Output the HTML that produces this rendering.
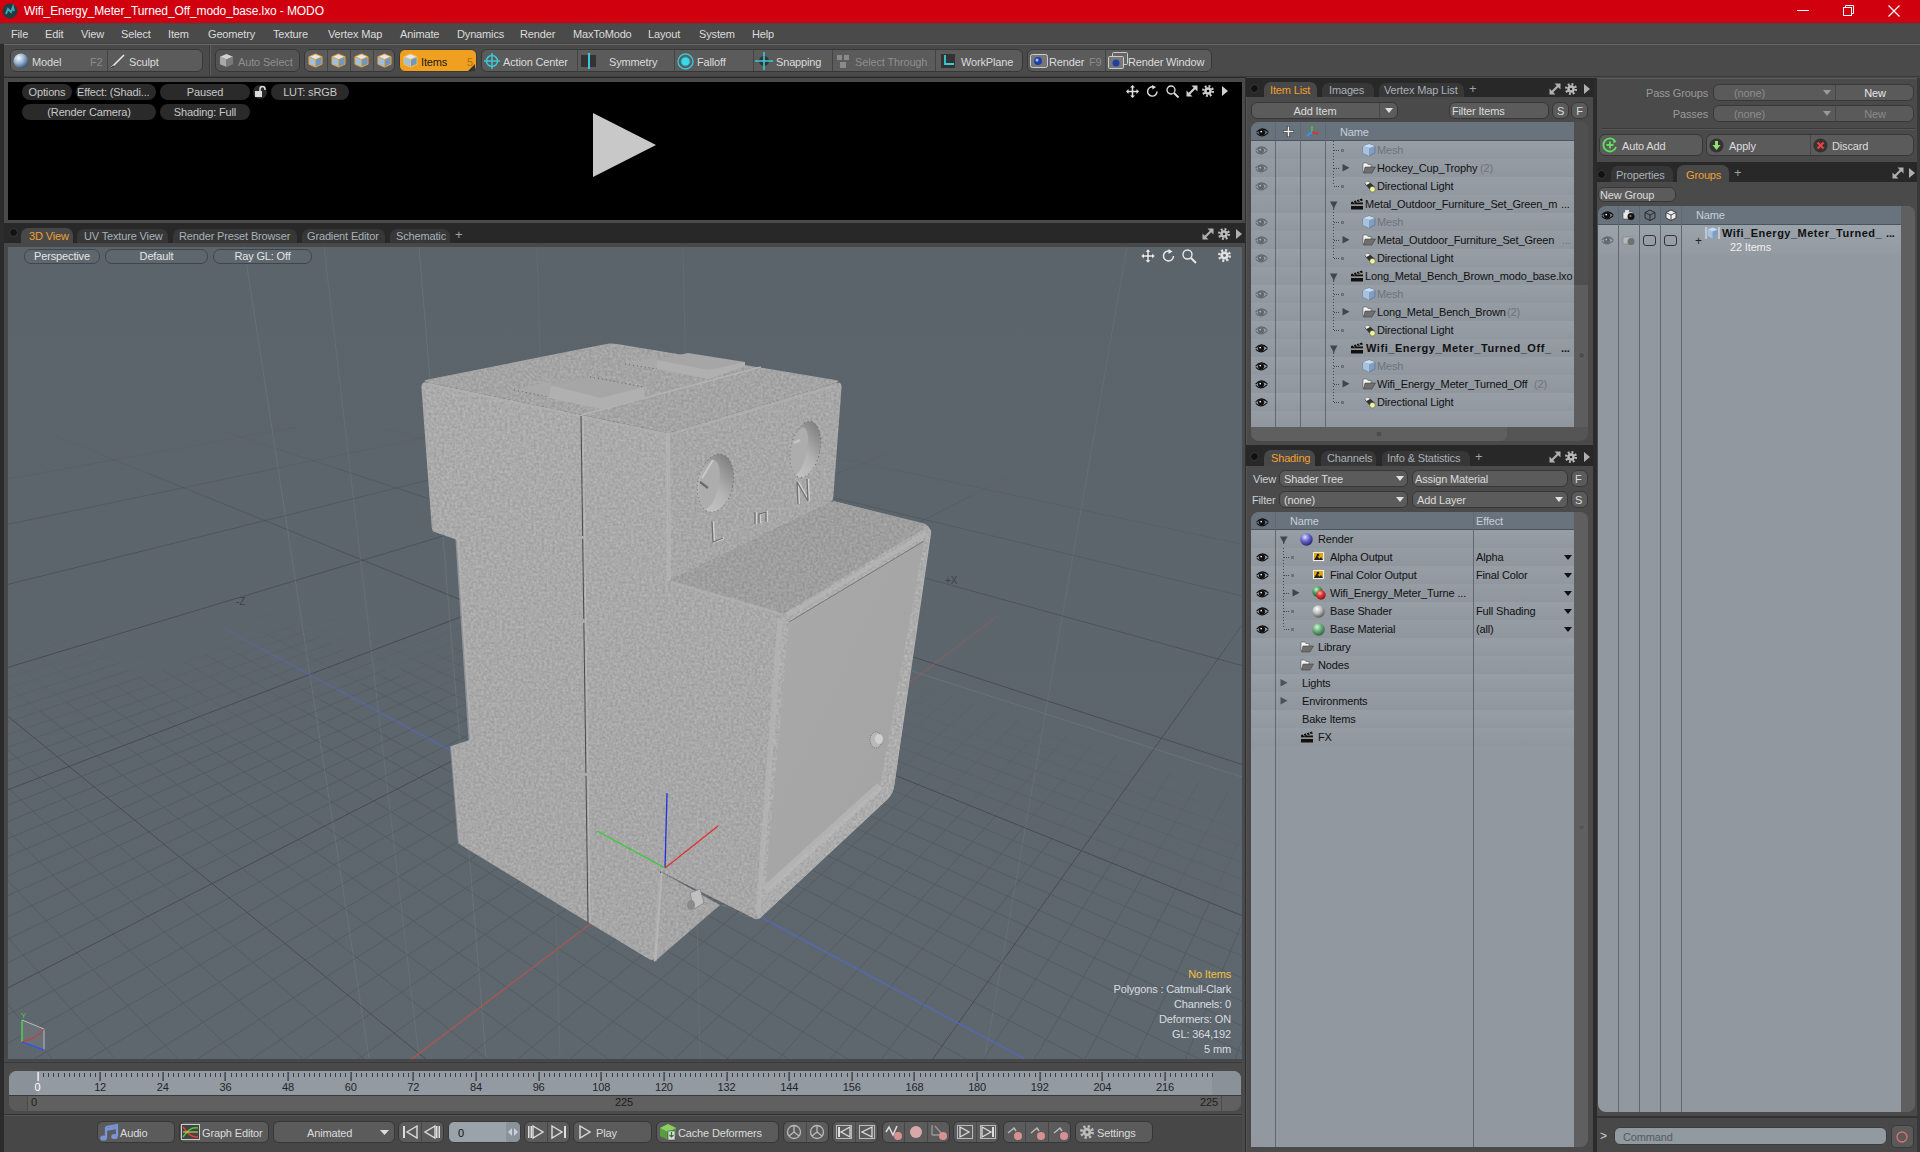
<!DOCTYPE html>
<html><head><meta charset="utf-8"><style>
*{box-sizing:border-box;margin:0;padding:0}
html,body{width:1920px;height:1152px;overflow:hidden;background:#2c2c2c;font-family:"Liberation Sans",sans-serif;font-size:11px;letter-spacing:-0.15px;color:#d0d0d0}
.a{position:absolute}
.t{position:absolute;white-space:nowrap;line-height:14px}
svg{position:absolute;overflow:visible}

.btn{position:absolute;background:#5b5b5b;border:1px solid #353535;border-radius:6px}
.rb{position:absolute;background:#2a2a2a;border-radius:8px}
.vb{position:absolute;background:#5f676e;border:1px solid #3e454b;border-radius:7px}
.tab{position:absolute;background:#383838;border-radius:8px 8px 0 0}
.on{background:#484848}
.dv{position:absolute;width:1px;background:#3c3c3c}
</style></head><body>
<div class="a" style="left:0px;top:0px;width:1920px;height:1152px;background:#2d2d2d;"></div>
<div class="a" style="left:0px;top:0px;width:1920px;height:23px;background:#d0000f;"></div>
<div class="a" style="left:0px;top:23px;width:1920px;height:1px;background:#3e4848;"></div>
<svg style="left:2px;top:3px" width="16" height="16"><circle cx="8" cy="8" r="7.5" fill="#223c43"/><path d="M4 11 L6 6 L9 9 L11 4 L12 8" stroke="#3aa7b8" stroke-width="2" fill="none"/></svg>
<div class="t" style="left:24px;top:4.24px;color:#ffffff;font-size:12px;letter-spacing:-0.1px;">Wifi_Energy_Meter_Turned_Off_modo_base.lxo - MODO</div>
<svg style="left:1797px;top:10px" width="14" height="2"><rect width="12" height="1" fill="#fff"/></svg>
<svg style="left:1843px;top:5px" width="12" height="12"><rect x="0.5" y="2.5" width="8" height="8" fill="none" stroke="#fff"/><path d="M2.5 2.5 V0.5 H10.5 V8.5 H8.5" fill="none" stroke="#fff"/></svg>
<svg style="left:1888px;top:5px" width="12" height="12"><path d="M0.5 0.5 L11.5 11.5 M11.5 0.5 L0.5 11.5" stroke="#fff" stroke-width="1.2"/></svg>
<div class="a" style="left:0px;top:24px;width:1920px;height:20px;background:#4a4a4a;"></div>
<div class="t" style="left:11px;top:27.22px;color:#dcdcdc;font-size:11px;">File</div>
<div class="t" style="left:45px;top:27.22px;color:#dcdcdc;font-size:11px;">Edit</div>
<div class="t" style="left:81px;top:27.22px;color:#dcdcdc;font-size:11px;">View</div>
<div class="t" style="left:121px;top:27.22px;color:#dcdcdc;font-size:11px;">Select</div>
<div class="t" style="left:168px;top:27.22px;color:#dcdcdc;font-size:11px;">Item</div>
<div class="t" style="left:208px;top:27.22px;color:#dcdcdc;font-size:11px;">Geometry</div>
<div class="t" style="left:273px;top:27.22px;color:#dcdcdc;font-size:11px;">Texture</div>
<div class="t" style="left:328px;top:27.22px;color:#dcdcdc;font-size:11px;">Vertex Map</div>
<div class="t" style="left:400px;top:27.22px;color:#dcdcdc;font-size:11px;">Animate</div>
<div class="t" style="left:457px;top:27.22px;color:#dcdcdc;font-size:11px;">Dynamics</div>
<div class="t" style="left:520px;top:27.22px;color:#dcdcdc;font-size:11px;">Render</div>
<div class="t" style="left:573px;top:27.22px;color:#dcdcdc;font-size:11px;">MaxToModo</div>
<div class="t" style="left:648px;top:27.22px;color:#dcdcdc;font-size:11px;">Layout</div>
<div class="t" style="left:699px;top:27.22px;color:#dcdcdc;font-size:11px;">System</div>
<div class="t" style="left:752px;top:27.22px;color:#dcdcdc;font-size:11px;">Help</div>
<div class="a" style="left:0px;top:43px;width:1920px;height:1px;background:#444444;"></div>
<div class="a" style="left:4px;top:44px;width:1916px;height:34px;background:#4a4a4a;"></div>
<div class="a" style="left:0px;top:44px;width:1920px;height:1px;background:#686868;"></div>
<div class="a" style="left:4px;top:76px;width:1916px;height:1px;background:#3b3b3b;"></div>
<div class="a" style="left:0px;top:44px;width:4px;height:1108px;background:#2b2b2b;"></div>
<div class="a" style="left:10px;top:49px;width:193px;height:23px;background:#5b5b5b;border:1px solid #373737;border-radius:6px"></div>
<div class="a" style="left:107px;top:50px;width:1px;height:21px;background:#444;"></div>
<svg style="left:13px;top:53px" width="16" height="16"><defs><radialGradient id="sph" cx="0.35" cy="0.3" r="0.7"><stop offset="0" stop-color="#f4f8ff"/><stop offset="0.5" stop-color="#9ab6d4"/><stop offset="1" stop-color="#3d5670"/></radialGradient></defs><circle cx="8" cy="8" r="7.5" fill="url(#sph)"/></svg>
<div class="t" style="left:32px;top:54.72px;color:#dcdcdc;font-size:11px;">Model</div>
<div class="t" style="left:90px;top:54.72px;color:#8c8c8c;font-size:11px;">F2</div>
<svg style="left:110px;top:53px" width="16" height="16"><path d="M1 15 L14 2" stroke="#e8e8e8" stroke-width="1.6"/><path d="M1 15 L4 13" stroke="#333" stroke-width="1.5"/></svg>
<div class="t" style="left:129px;top:54.72px;color:#dcdcdc;font-size:11px;">Sculpt</div>
<div class="a" style="left:209px;top:45px;width:1px;height:31px;background:#3a3a3a;"></div>
<div class="a" style="left:210px;top:45px;width:1px;height:31px;background:#5e5e5e;"></div>
<div class="a" style="left:215px;top:49px;width:85px;height:23px;background:#545454;border:1px solid #373737;border-radius:6px"></div>
<svg style="left:219px;top:53px" width="15" height="15" viewBox="0 0 16 16"><path d="M8 1 L15 4 L8 7 L1 4Z" fill="#d0d0d0"/><path d="M1 4 L8 7 L8 15 L1 12Z" fill="#a8a8a8"/><path d="M15 4 L8 7 L8 15 L15 12Z" fill="#7a7a7a"/></svg>
<div class="t" style="left:238px;top:54.72px;color:#8e8e8e;font-size:11px;">Auto Select</div>
<div class="a" style="left:304px;top:49px;width:91px;height:23px;background:#5b5b5b;border:1px solid #373737;border-radius:6px"></div>
<svg style="left:308px;top:53px" width="15" height="15" viewBox="0 0 16 16"><path d="M8 1 L15 4 L8 7 L1 4Z" fill="#dfe8f2"/><path d="M1 4 L8 7 L8 15 L1 12Z" fill="#9ec0e0"/><path d="M15 4 L8 7 L8 15 L15 12Z" fill="#6f98c0"/><path d="M8 1 L15 4 L15 12 L8 15 L1 12 L1 4Z M1 4 L8 7 L15 4 M8 7 V15" fill="none" stroke="#f0a030" stroke-width="1"/></svg>
<div class="a" style="left:327px;top:50px;width:1px;height:21px;background:#444;"></div>
<svg style="left:331px;top:53px" width="15" height="15" viewBox="0 0 16 16"><path d="M8 1 L15 4 L8 7 L1 4Z" fill="#dfe8f2"/><path d="M1 4 L8 7 L8 15 L1 12Z" fill="#9ec0e0"/><path d="M15 4 L8 7 L8 15 L15 12Z" fill="#6f98c0"/><path d="M8 1 L15 4 L15 12 L8 15 L1 12 L1 4Z M1 4 L8 7 L15 4 M8 7 V15" fill="none" stroke="#f0a030" stroke-width="1"/></svg>
<div class="a" style="left:350px;top:50px;width:1px;height:21px;background:#444;"></div>
<svg style="left:354px;top:53px" width="15" height="15" viewBox="0 0 16 16"><path d="M8 1 L15 4 L8 7 L1 4Z" fill="#dfe8f2"/><path d="M1 4 L8 7 L8 15 L1 12Z" fill="#9ec0e0"/><path d="M15 4 L8 7 L8 15 L15 12Z" fill="#6f98c0"/><path d="M8 1 L15 4 L15 12 L8 15 L1 12 L1 4Z M1 4 L8 7 L15 4 M8 7 V15" fill="none" stroke="#f0a030" stroke-width="1"/></svg>
<div class="a" style="left:373px;top:50px;width:1px;height:21px;background:#444;"></div>
<svg style="left:377px;top:53px" width="15" height="15" viewBox="0 0 16 16"><path d="M8 1 L15 4 L8 7 L1 4Z" fill="#dfe8f2"/><path d="M1 4 L8 7 L8 15 L1 12Z" fill="#9ec0e0"/><path d="M15 4 L8 7 L8 15 L15 12Z" fill="#6f98c0"/><path d="M8 1 L15 4 L15 12 L8 15 L1 12 L1 4Z M1 4 L8 7 L15 4 M8 7 V15" fill="none" stroke="#f0a030" stroke-width="1"/></svg>
<div class="a" style="left:399px;top:49px;width:78px;height:23px;background:#f0a020;border:1px solid #3a3a3a;border-radius:6px"></div>
<svg style="left:403px;top:53px" width="15" height="15" viewBox="0 0 16 16"><path d="M8 1 L15 4 L8 7 L1 4Z" fill="#dfe8f2"/><path d="M1 4 L8 7 L8 15 L1 12Z" fill="#9ec0e0"/><path d="M15 4 L8 7 L8 15 L15 12Z" fill="#6f98c0"/><path d="M8 1 L15 4 L15 12 L8 15 L1 12 L1 4Z M1 4 L8 7 L15 4 M8 7 V15" fill="none" stroke="#f0c060" stroke-width="1"/></svg>
<div class="t" style="left:421px;top:54.72px;color:#1a1a1a;font-size:11px;">Items</div>
<div class="t" style="left:467px;top:54.72px;color:#b07010;font-size:11px;">5</div>
<svg style="left:468px;top:64px" width="7" height="7"><path d="M7 0 L7 7 L0 7Z" fill="#333"/></svg>
<div class="a" style="left:481px;top:49px;width:542px;height:23px;background:#5b5b5b;border:1px solid #373737;border-radius:6px"></div>
<div class="a" style="left:577px;top:50px;width:1px;height:21px;background:#444;"></div>
<div class="a" style="left:674px;top:50px;width:1px;height:21px;background:#444;"></div>
<div class="a" style="left:753px;top:50px;width:1px;height:21px;background:#444;"></div>
<div class="a" style="left:832px;top:50px;width:1px;height:21px;background:#444;"></div>
<div class="a" style="left:935px;top:50px;width:1px;height:21px;background:#444;"></div>
<svg style="left:484px;top:53px" width="16" height="16"><circle cx="8" cy="8" r="5.5" fill="none" stroke="#3cc8d8" stroke-width="1.5"/><path d="M8 0 V16 M0 8 H16" stroke="#3cc8d8" stroke-width="1.5"/></svg>
<div class="t" style="left:503px;top:54.72px;color:#dcdcdc;font-size:11px;">Action Center</div>
<svg style="left:581px;top:53px" width="16" height="16"><rect x="0" y="2" width="15" height="12" fill="#333"/><rect x="7" y="0" width="2" height="16" fill="#3cc8d8"/></svg>
<div class="t" style="left:609px;top:54.72px;color:#dcdcdc;font-size:11px;">Symmetry</div>
<svg style="left:677px;top:53px" width="17" height="17"><circle cx="8.5" cy="8.5" r="7.5" fill="none" stroke="#3cc8d8" stroke-width="1.3"/><circle cx="8.5" cy="8.5" r="4.5" fill="#3cd8e8" stroke="#2a9aa8"/></svg>
<div class="t" style="left:697px;top:54.72px;color:#dcdcdc;font-size:11px;">Falloff</div>
<svg style="left:755px;top:52px" width="18" height="18"><circle cx="9" cy="9" r="5" fill="#333"/><path d="M9 0 V18 M0 9 H18" stroke="#3cc8d8" stroke-width="1.6"/></svg>
<div class="t" style="left:776px;top:54.72px;color:#dcdcdc;font-size:11px;">Snapping</div>
<svg style="left:835px;top:53px" width="16" height="16"><path d="M2 2 h5 v5 h-5z M9 2 h5 v5 h-5z M5 9 h6 v6 h-6z" fill="#8a8a8a"/></svg>
<div class="t" style="left:855px;top:54.72px;color:#8e8e8e;font-size:11px;">Select Through</div>
<svg style="left:940px;top:53px" width="16" height="16"><rect x="1" y="1" width="14" height="14" fill="#333"/><path d="M5 2 V11 H14" stroke="#3cc8d8" stroke-width="1.8" fill="none"/></svg>
<div class="t" style="left:961px;top:54.72px;color:#dcdcdc;font-size:11px;">WorkPlane</div>
<div class="a" style="left:1027px;top:49px;width:185px;height:23px;background:#5b5b5b;border:1px solid #373737;border-radius:6px"></div>
<div class="a" style="left:1105px;top:50px;width:1px;height:21px;background:#444;"></div>
<svg style="left:1030px;top:53px" width="18" height="16"><rect x="0.5" y="1.5" width="17" height="13" rx="2" fill="#777" stroke="#ccc"/><circle cx="8" cy="8" r="4" fill="#2040a0"/><circle cx="7" cy="7" r="1.5" fill="#a0c0ff"/></svg>
<div class="t" style="left:1049px;top:54.72px;color:#dcdcdc;font-size:11px;">Render</div>
<div class="t" style="left:1089px;top:54.72px;color:#8c8c8c;font-size:11px;">F9</div>
<svg style="left:1108px;top:52px" width="20" height="18"><rect x="4.5" y="0.5" width="15" height="12" rx="1" fill="#666" stroke="#ccc"/><rect x="0.5" y="4.5" width="15" height="12" rx="1" fill="#777" stroke="#ccc"/><circle cx="8" cy="11" r="3.5" fill="#2040a0"/></svg>
<div class="t" style="left:1128px;top:54.72px;color:#dcdcdc;font-size:11px;">Render Window</div>
<div class="a" style="left:4px;top:77px;width:1242px;height:1px;background:#2b2b2b;"></div>
<div class="a" style="left:4px;top:78px;width:1242px;height:145px;background:#4a4a4a;"></div>
<div class="a" style="left:8px;top:82px;width:1234px;height:138px;background:#000;"></div>
<div class="a" style="left:22px;top:84px;width:50px;height:16px;background:#2a2a2a;border-radius:8px"></div>
<div class="t" style="left:22px;width:50px;text-align:center;top:85.22px;color:#c8c8c8;font-size:11px;">Options</div>
<div class="a" style="left:76px;top:84px;width:80px;height:16px;background:#2a2a2a;border-radius:8px"></div>
<div class="t" style="left:77px;top:85.22px;color:#c8c8c8;font-size:11px;">Effect: (Shadi...</div>
<div class="a" style="left:160px;top:84px;width:90px;height:16px;background:#2a2a2a;border-radius:8px"></div>
<div class="t" style="left:160px;width:90px;text-align:center;top:85.22px;color:#c8c8c8;font-size:11px;">Paused</div>
<svg style="left:253px;top:85px" width="14" height="14"><circle cx="7" cy="7" r="7" fill="#2a2a2a"/><path d="M7 6 V4 a2.5 2.5 0 0 1 5 0 V5" stroke="#ddd" stroke-width="1.5" fill="none"/><rect x="2" y="6" width="7" height="6" fill="#ddd"/></svg>
<div class="a" style="left:271px;top:84px;width:78px;height:16px;background:#2a2a2a;border-radius:8px"></div>
<div class="t" style="left:271px;width:78px;text-align:center;top:85.22px;color:#c8c8c8;font-size:11px;">LUT: sRGB</div>
<div class="a" style="left:22px;top:104px;width:134px;height:16px;background:#2a2a2a;border-radius:8px"></div>
<div class="t" style="left:22px;width:134px;text-align:center;top:105.22px;color:#c8c8c8;font-size:11px;">(Render Camera)</div>
<div class="a" style="left:160px;top:104px;width:90px;height:16px;background:#2a2a2a;border-radius:8px"></div>
<div class="t" style="left:160px;width:90px;text-align:center;top:105.22px;color:#c8c8c8;font-size:11px;">Shading: Full</div>
<svg style="left:592px;top:112px" width="65" height="66"><path d="M1 1 L64 33 L1 65Z" fill="#c8c8c8"/></svg>
<svg style="left:1126px;top:85px" width="13" height="13"><path d="M6.5 0 L9 2.5 H7.3 V5.7 H10.5 V4 L13 6.5 L10.5 9 V7.3 H7.3 V10.5 H9 L6.5 13 L4 10.5 H5.7 V7.3 H2.5 V9 L0 6.5 L2.5 4 V5.7 H5.7 V2.5 H4Z" fill="#e0e0e0"/></svg>
<svg style="left:1146px;top:85px" width="13" height="13"><path d="M11 6.5 A4.7 4.7 0 1 1 7.5 1.9" fill="none" stroke="#e0e0e0" stroke-width="1.4"/><path d="M6 0 L10 2 L6.5 4.5Z" fill="#e0e0e0"/></svg>
<svg style="left:1166px;top:85px" width="13" height="13"><circle cx="5" cy="5" r="4" fill="none" stroke="#e0e0e0" stroke-width="1.3"/><path d="M8 8 L12.5 12.5" stroke="#e0e0e0" stroke-width="1.8"/></svg>
<svg style="left:1186px;top:85px" width="12" height="12"><path d="M5.5 0.5 H11.5 V6.5 Z M0.5 5.5 V11.5 H6.5 Z" fill="#d0d0d0"/><path d="M9.5 2.5 L2.5 9.5" stroke="#d0d0d0" stroke-width="2.2"/></svg>
<svg style="left:1202px;top:85px" width="12" height="12" viewBox="0 0 12 12"><circle cx="6.0" cy="6.0" r="4.800000000000001" fill="none" stroke="#d0d0d0" stroke-width="2.4000000000000004" stroke-dasharray="1.88"/><circle cx="6.0" cy="6.0" r="3.7199999999999998" fill="#d0d0d0"/><circle cx="6.0" cy="6.0" r="1.32" fill="#000"/></svg>
<svg style="left:1222px;top:86px" width="6" height="10"><path d="M0 0 L6 5 L0 10Z" fill="#d0d0d0"/></svg>
<div class="a" style="left:4px;top:223px;width:1242px;height:20px;background:#282828;"></div>
<svg style="left:9px;top:228px" width="9" height="9"><circle cx="4.5" cy="4.5" r="4" fill="#111" stroke="#3a3a3a"/></svg>
<div class="a" style="left:21px;top:228px;width:52px;height:15px;background:#484848;border-radius:7px 7px 0 0"></div>
<div class="t" style="left:29px;top:229.22px;color:#f0a030;font-size:11px;">3D View</div>
<div class="a" style="left:77px;top:229px;width:91px;height:14px;background:#373737;border-radius:7px 7px 0 0"></div>
<div class="t" style="left:84px;top:229.22px;color:#a9b1b9;font-size:11px;">UV Texture View</div>
<div class="a" style="left:173px;top:229px;width:124px;height:14px;background:#373737;border-radius:7px 7px 0 0"></div>
<div class="t" style="left:179px;top:229.22px;color:#a9b1b9;font-size:11px;">Render Preset Browser</div>
<div class="a" style="left:302px;top:229px;width:83px;height:14px;background:#373737;border-radius:7px 7px 0 0"></div>
<div class="t" style="left:307px;top:229.22px;color:#a9b1b9;font-size:11px;">Gradient Editor</div>
<div class="a" style="left:390px;top:229px;width:60px;height:14px;background:#373737;border-radius:7px 7px 0 0"></div>
<div class="t" style="left:396px;top:229.22px;color:#a9b1b9;font-size:11px;">Schematic</div>
<div class="t" style="left:455px;top:228.26px;color:#a0a0a0;font-size:13px;">+</div>
<svg style="left:1202px;top:228px" width="12" height="12"><path d="M5.5 0.5 H11.5 V6.5 Z M0.5 5.5 V11.5 H6.5 Z" fill="#b0b0b0"/><path d="M9.5 2.5 L2.5 9.5" stroke="#b0b0b0" stroke-width="2.2"/></svg>
<svg style="left:1218px;top:228px" width="12" height="12" viewBox="0 0 12 12"><circle cx="6.0" cy="6.0" r="4.800000000000001" fill="none" stroke="#bdbdbd" stroke-width="2.4000000000000004" stroke-dasharray="1.88"/><circle cx="6.0" cy="6.0" r="3.7199999999999998" fill="#bdbdbd"/><circle cx="6.0" cy="6.0" r="1.32" fill="#2a2a2a"/></svg>
<svg style="left:1236px;top:229px" width="6" height="10"><path d="M0 0 L6 5 L0 10Z" fill="#b0b0b0"/></svg>
<div class="a" style="left:4px;top:243px;width:1242px;height:820px;background:#484848;"></div>
<div class="a" style="left:8px;top:247px;width:1234px;height:812px;background:#5f676e;"></div>
<div class="a" style="left:4px;top:1062px;width:1242px;height:52px;background:#4a4a4a;"></div>
<div class="a" style="left:4px;top:1062px;width:1242px;height:1px;background:#3a3a3a;"></div>
<div class="a" style="left:4px;top:1114px;width:1242px;height:1px;background:#333;"></div>
<div class="a" style="left:4px;top:1115px;width:1242px;height:37px;background:#474747;"></div>
<div class="a" style="left:4px;top:1115px;width:1242px;height:1px;background:#555;"></div>
<div class="a" style="left:1242px;top:78px;width:3px;height:145px;background:#4a4a4a;"></div>
<div class="a" style="left:1242px;top:243px;width:3px;height:909px;background:#4a4a4a;"></div>
<div class="a" style="left:1245px;top:78px;width:2px;height:1074px;background:#2e2e2e;"></div>
<div class="a" style="left:1246px;top:78px;width:347px;height:19px;background:#282828;"></div>
<svg style="left:1250px;top:84px" width="9" height="9"><circle cx="4.5" cy="4.5" r="4" fill="#111" stroke="#3a3a3a"/></svg>
<div class="a" style="left:1264px;top:82px;width:53px;height:15px;background:#484848;border-radius:7px 7px 0 0"></div>
<div class="t" style="left:1270px;top:83.22px;color:#f0a030;font-size:11px;">Item List</div>
<div class="a" style="left:1322px;top:83px;width:52px;height:14px;background:#373737;border-radius:7px 7px 0 0"></div>
<div class="t" style="left:1329px;top:83.22px;color:#a9b1b9;font-size:11px;">Images</div>
<div class="a" style="left:1379px;top:83px;width:85px;height:14px;background:#373737;border-radius:7px 7px 0 0"></div>
<div class="t" style="left:1384px;top:83.22px;color:#a9b1b9;font-size:11px;">Vertex Map List</div>
<div class="t" style="left:1469px;top:82.26px;color:#a0a0a0;font-size:13px;">+</div>
<svg style="left:1549px;top:83px" width="12" height="12"><path d="M5.5 0.5 H11.5 V6.5 Z M0.5 5.5 V11.5 H6.5 Z" fill="#b0b0b0"/><path d="M9.5 2.5 L2.5 9.5" stroke="#b0b0b0" stroke-width="2.2"/></svg>
<svg style="left:1565px;top:83px" width="12" height="12" viewBox="0 0 12 12"><circle cx="6.0" cy="6.0" r="4.800000000000001" fill="none" stroke="#bdbdbd" stroke-width="2.4000000000000004" stroke-dasharray="1.88"/><circle cx="6.0" cy="6.0" r="3.7199999999999998" fill="#bdbdbd"/><circle cx="6.0" cy="6.0" r="1.32" fill="#2a2a2a"/></svg>
<svg style="left:1584px;top:84px" width="6" height="10"><path d="M0 0 L6 5 L0 10Z" fill="#b0b0b0"/></svg>
<div class="a" style="left:1246px;top:97px;width:347px;height:348px;background:#4a4a4a;"></div>
<div class="a" style="left:1246px;top:97px;width:1px;height:348px;background:#555;"></div>
<div class="a" style="left:1251px;top:102px;width:147px;height:17px;background:#5b5b5b;border:1px solid #373737;border-radius:6px"></div>
<div class="a" style="left:1379px;top:103px;width:1px;height:15px;background:#474747;"></div>
<div class="t" style="left:1251px;width:128px;text-align:center;top:104.22px;color:#dcdcdc;font-size:11px;">Add Item</div>
<svg style="left:1385px;top:108px" width="8" height="5"><path d="M0 0 H8 L4 5Z" fill="#e0e0e0"/></svg>
<div class="a" style="left:1449px;top:102px;width:100px;height:17px;background:#5b5b5b;border:1px solid #373737;border-radius:6px"></div>
<div class="t" style="left:1452px;top:104.22px;color:#dcdcdc;font-size:11px;">Filter Items</div>
<div class="a" style="left:1552px;top:102px;width:17px;height:17px;background:#5b5b5b;border:1px solid #373737;border-radius:6px"></div>
<div class="t" style="left:1552px;width:17px;text-align:center;top:104.22px;color:#dcdcdc;font-size:11px;">S</div>
<div class="a" style="left:1571px;top:102px;width:17px;height:17px;background:#5b5b5b;border:1px solid #373737;border-radius:6px"></div>
<div class="t" style="left:1571px;width:17px;text-align:center;top:104.22px;color:#dcdcdc;font-size:11px;">F</div>
<div class="a" style="left:1251px;top:122px;width:337px;height:306px;background:#5e5e5e;border-radius:8px 8px 0 0"></div>
<div class="a" style="left:1574px;top:122px;width:14px;height:163px;background:#4f4f4f;border-radius:0 8px 0 0"></div>
<div class="a" style="left:1574px;top:285px;width:14px;height:142px;background:#5d5d5d;border-radius:6px 6px 0 0"></div>
<svg style="left:1578px;top:352px" width="7" height="7"><circle cx="3.5" cy="3.5" r="3" fill="#4c4c4c" stroke="#6a6a6a" stroke-width="0.8"/></svg>
<div class="a" style="left:1251px;top:122px;width:323px;height:19px;background:#68737e;border-radius:8px 0 0 0"></div>
<div class="a" style="left:1251px;top:140px;width:323px;height:1px;background:#4a545e;"></div>
<div class="a" style="left:1251px;top:141px;width:323px;height:18px;background:linear-gradient(#979ea6,#90979f);"></div>
<div class="a" style="left:1251px;top:159px;width:323px;height:18px;background:linear-gradient(#959ca4,#8f969e);"></div>
<div class="a" style="left:1251px;top:177px;width:323px;height:18px;background:linear-gradient(#979ea6,#90979f);"></div>
<div class="a" style="left:1251px;top:195px;width:323px;height:18px;background:linear-gradient(#959ca4,#8f969e);"></div>
<div class="a" style="left:1251px;top:213px;width:323px;height:18px;background:linear-gradient(#979ea6,#90979f);"></div>
<div class="a" style="left:1251px;top:231px;width:323px;height:18px;background:linear-gradient(#959ca4,#8f969e);"></div>
<div class="a" style="left:1251px;top:249px;width:323px;height:18px;background:linear-gradient(#979ea6,#90979f);"></div>
<div class="a" style="left:1251px;top:267px;width:323px;height:18px;background:linear-gradient(#959ca4,#8f969e);"></div>
<div class="a" style="left:1251px;top:285px;width:323px;height:18px;background:linear-gradient(#979ea6,#90979f);"></div>
<div class="a" style="left:1251px;top:303px;width:323px;height:18px;background:linear-gradient(#959ca4,#8f969e);"></div>
<div class="a" style="left:1251px;top:321px;width:323px;height:18px;background:linear-gradient(#979ea6,#90979f);"></div>
<div class="a" style="left:1251px;top:339px;width:323px;height:18px;background:linear-gradient(#959ca4,#8f969e);"></div>
<div class="a" style="left:1251px;top:357px;width:323px;height:18px;background:linear-gradient(#979ea6,#90979f);"></div>
<div class="a" style="left:1251px;top:375px;width:323px;height:18px;background:linear-gradient(#959ca4,#8f969e);"></div>
<div class="a" style="left:1251px;top:393px;width:323px;height:18px;background:linear-gradient(#979ea6,#90979f);"></div>
<div class="a" style="left:1251px;top:411px;width:323px;height:16px;background:linear-gradient(#959ca4,#8f969e);"></div>
<div class="a" style="left:1275px;top:122px;width:1px;height:305px;background:#5f6973;"></div>
<div class="a" style="left:1300px;top:122px;width:1px;height:305px;background:#5f6973;"></div>
<div class="a" style="left:1325px;top:122px;width:1px;height:305px;background:#5f6973;"></div>
<svg style="left:1256px;top:127px;opacity:1" width="13" height="11" viewBox="0 0 13 11"><path d="M0.6 5.2 Q6 -1.2 12.4 4.8" fill="none" stroke="#111" stroke-width="1.1"/><path d="M2.2 4 Q6.5 0.8 10.8 3.6" fill="none" stroke="#111" stroke-width="0.8"/><path d="M0.8 6.4 Q6 11.6 12.4 5.6" fill="none" stroke="#111" stroke-width="1.1"/><circle cx="6" cy="5.5" r="3.1" fill="#111"/><circle cx="5.2" cy="4.6" r="0.85" fill="#fff"/></svg>
<svg style="left:1282px;top:125px" width="13" height="13" viewBox="0 0 13 13"><path d="M6.5 1 V12 M1 6.5 H12" stroke="#333" stroke-width="3.2"/><path d="M6.5 1.5 V11.5 M1.5 6.5 H11.5" stroke="#f0f0f0" stroke-width="1.6"/></svg>
<svg style="left:1305px;top:125px" width="15" height="13" viewBox="0 0 15 13"><path d="M7 7 V1" stroke="#40c040" stroke-width="2"/><path d="M7 7 L13 9" stroke="#e03030" stroke-width="2.2"/><path d="M7 7 L2 11" stroke="#3a90ff" stroke-width="2"/></svg>
<div class="t" style="left:1340px;top:125.22px;color:#c6d0da;font-size:11px;">Name</div>
<div class="a" style="left:1251px;top:427px;width:337px;height:14px;background:#555;border-radius:0 0 8px 8px"></div>
<div class="a" style="left:1251px;top:427px;width:256px;height:14px;background:#5f5f5f;border-radius:0 0 6px 8px"></div>
<svg style="left:1375px;top:430px" width="8" height="8"><circle cx="4" cy="4" r="3.2" fill="#4c4c4c" stroke="#6a6a6a" stroke-width="0.8"/></svg>
<svg style="left:1255px;top:145px;opacity:0.85" width="13" height="11" viewBox="0 0 13 11"><path d="M0.6 5.2 Q6 -1.2 12.4 4.8" fill="none" stroke="#5a6067" stroke-width="1.1"/><path d="M2.2 4 Q6.5 0.8 10.8 3.6" fill="none" stroke="#5a6067" stroke-width="0.8"/><path d="M0.8 6.4 Q6 11.6 12.4 5.6" fill="none" stroke="#5a6067" stroke-width="1.1"/><circle cx="6" cy="5.5" r="3.1" fill="#5a6067"/><circle cx="5.2" cy="4.6" r="0.85" fill="#c0c4c8"/></svg>
<svg style="left:1362px;top:143px" width="14" height="14" viewBox="0 0 14 14"><path d="M7 1 L13 3 L13 10 L7 13 L1 10 L1 3Z" fill="#7d9fc4" stroke="#5a6a7a" stroke-width="0.6"/><path d="M1 3 L7 5 L13 3 L7 1Z" fill="#c8dcf0"/><path d="M1 3 L7 5 L7 13 L1 10Z" fill="#a5c2e0"/></svg>
<div class="t" style="left:1377px;top:142.72px;color:#6f757c;font-size:11px;">Mesh</div>
<svg style="left:1255px;top:163px;opacity:0.85" width="13" height="11" viewBox="0 0 13 11"><path d="M0.6 5.2 Q6 -1.2 12.4 4.8" fill="none" stroke="#5a6067" stroke-width="1.1"/><path d="M2.2 4 Q6.5 0.8 10.8 3.6" fill="none" stroke="#5a6067" stroke-width="0.8"/><path d="M0.8 6.4 Q6 11.6 12.4 5.6" fill="none" stroke="#5a6067" stroke-width="1.1"/><circle cx="6" cy="5.5" r="3.1" fill="#5a6067"/><circle cx="5.2" cy="4.6" r="0.85" fill="#c0c4c8"/></svg>
<svg style="left:1342px;top:164px" width="8" height="8"><path d="M0.5 0 V7.5 L7.5 3.75Z" fill="#3e4650"/></svg>
<svg style="left:1362px;top:162px" width="14" height="12" viewBox="0 0 14 12"><path d="M1 1 H5 L6 2.5 H9 V10 H1Z" fill="#f4f4f4" stroke="#555" stroke-width="0.6"/><path d="M3 5 H13.5 L10 11 H1.5Z" fill="#6e6e6e" stroke="#444" stroke-width="0.6"/></svg>
<div class="t" style="left:1377px;top:160.72px;color:#111;font-size:11px;">Hockey_Cup_Trophy</div>
<svg style="left:1255px;top:181px;opacity:0.85" width="13" height="11" viewBox="0 0 13 11"><path d="M0.6 5.2 Q6 -1.2 12.4 4.8" fill="none" stroke="#5a6067" stroke-width="1.1"/><path d="M2.2 4 Q6.5 0.8 10.8 3.6" fill="none" stroke="#5a6067" stroke-width="0.8"/><path d="M0.8 6.4 Q6 11.6 12.4 5.6" fill="none" stroke="#5a6067" stroke-width="1.1"/><circle cx="6" cy="5.5" r="3.1" fill="#5a6067"/><circle cx="5.2" cy="4.6" r="0.85" fill="#c0c4c8"/></svg>
<svg style="left:1363px;top:180px" width="13" height="13" viewBox="0 0 13 13"><path d="M1.5 3.5 L5 0.8 L12 7 L8 11Z" fill="#333"/><path d="M2 3 L5 1.2 L7 3 L3.5 5Z" fill="#eee"/><circle cx="9.5" cy="9.2" r="2.8" fill="#f4f49a" stroke="#555" stroke-width="0.6"/></svg>
<div class="t" style="left:1377px;top:178.72px;color:#111;font-size:11px;">Directional Light</div>
<svg style="left:1330px;top:201px" width="8" height="8"><path d="M0 0.5 H7.5 L3.75 7.5Z" fill="#3e4650"/><rect x="3.25" y="6" width="1" height="2" fill="#3e4650"/></svg>
<svg style="left:1350px;top:197px" width="14" height="13" viewBox="0 0 14 13"><rect x="1" y="5.5" width="12" height="7" fill="#111"/><path d="M1 5 L12 1.5 L12.8 3.5 L1.8 7Z" fill="#111"/><path d="M3 4.4 L4.5 5.8 M6 3.5 L7.5 4.9 M9 2.6 L10.5 4" stroke="#ddd" stroke-width="1"/><rect x="1" y="7.5" width="12" height="1.2" fill="#ccc"/></svg>
<div class="t" style="left:1365px;top:196.72px;color:#111;font-size:11px;">Metal_Outdoor_Furniture_Set_Green_m</div>
<div class="t" style="left:1561px;top:196.72px;color:#111;font-size:11px;">...</div>
<svg style="left:1255px;top:217px;opacity:0.85" width="13" height="11" viewBox="0 0 13 11"><path d="M0.6 5.2 Q6 -1.2 12.4 4.8" fill="none" stroke="#5a6067" stroke-width="1.1"/><path d="M2.2 4 Q6.5 0.8 10.8 3.6" fill="none" stroke="#5a6067" stroke-width="0.8"/><path d="M0.8 6.4 Q6 11.6 12.4 5.6" fill="none" stroke="#5a6067" stroke-width="1.1"/><circle cx="6" cy="5.5" r="3.1" fill="#5a6067"/><circle cx="5.2" cy="4.6" r="0.85" fill="#c0c4c8"/></svg>
<svg style="left:1362px;top:215px" width="14" height="14" viewBox="0 0 14 14"><path d="M7 1 L13 3 L13 10 L7 13 L1 10 L1 3Z" fill="#7d9fc4" stroke="#5a6a7a" stroke-width="0.6"/><path d="M1 3 L7 5 L13 3 L7 1Z" fill="#c8dcf0"/><path d="M1 3 L7 5 L7 13 L1 10Z" fill="#a5c2e0"/></svg>
<div class="t" style="left:1377px;top:214.72px;color:#6f757c;font-size:11px;">Mesh</div>
<svg style="left:1255px;top:235px;opacity:0.85" width="13" height="11" viewBox="0 0 13 11"><path d="M0.6 5.2 Q6 -1.2 12.4 4.8" fill="none" stroke="#5a6067" stroke-width="1.1"/><path d="M2.2 4 Q6.5 0.8 10.8 3.6" fill="none" stroke="#5a6067" stroke-width="0.8"/><path d="M0.8 6.4 Q6 11.6 12.4 5.6" fill="none" stroke="#5a6067" stroke-width="1.1"/><circle cx="6" cy="5.5" r="3.1" fill="#5a6067"/><circle cx="5.2" cy="4.6" r="0.85" fill="#c0c4c8"/></svg>
<svg style="left:1342px;top:236px" width="8" height="8"><path d="M0.5 0 V7.5 L7.5 3.75Z" fill="#3e4650"/></svg>
<svg style="left:1362px;top:234px" width="14" height="12" viewBox="0 0 14 12"><path d="M1 1 H5 L6 2.5 H9 V10 H1Z" fill="#f4f4f4" stroke="#555" stroke-width="0.6"/><path d="M3 5 H13.5 L10 11 H1.5Z" fill="#6e6e6e" stroke="#444" stroke-width="0.6"/></svg>
<div class="t" style="left:1377px;top:232.72px;color:#111;font-size:11px;">Metal_Outdoor_Furniture_Set_Green</div>
<div class="t" style="left:1562px;top:232.72px;color:#6f757c;font-size:11px;">...</div>
<svg style="left:1255px;top:253px;opacity:0.85" width="13" height="11" viewBox="0 0 13 11"><path d="M0.6 5.2 Q6 -1.2 12.4 4.8" fill="none" stroke="#5a6067" stroke-width="1.1"/><path d="M2.2 4 Q6.5 0.8 10.8 3.6" fill="none" stroke="#5a6067" stroke-width="0.8"/><path d="M0.8 6.4 Q6 11.6 12.4 5.6" fill="none" stroke="#5a6067" stroke-width="1.1"/><circle cx="6" cy="5.5" r="3.1" fill="#5a6067"/><circle cx="5.2" cy="4.6" r="0.85" fill="#c0c4c8"/></svg>
<svg style="left:1363px;top:252px" width="13" height="13" viewBox="0 0 13 13"><path d="M1.5 3.5 L5 0.8 L12 7 L8 11Z" fill="#333"/><path d="M2 3 L5 1.2 L7 3 L3.5 5Z" fill="#eee"/><circle cx="9.5" cy="9.2" r="2.8" fill="#f4f49a" stroke="#555" stroke-width="0.6"/></svg>
<div class="t" style="left:1377px;top:250.72px;color:#111;font-size:11px;">Directional Light</div>
<svg style="left:1330px;top:273px" width="8" height="8"><path d="M0 0.5 H7.5 L3.75 7.5Z" fill="#3e4650"/><rect x="3.25" y="6" width="1" height="2" fill="#3e4650"/></svg>
<svg style="left:1350px;top:269px" width="14" height="13" viewBox="0 0 14 13"><rect x="1" y="5.5" width="12" height="7" fill="#111"/><path d="M1 5 L12 1.5 L12.8 3.5 L1.8 7Z" fill="#111"/><path d="M3 4.4 L4.5 5.8 M6 3.5 L7.5 4.9 M9 2.6 L10.5 4" stroke="#ddd" stroke-width="1"/><rect x="1" y="7.5" width="12" height="1.2" fill="#ccc"/></svg>
<div class="t" style="left:1365px;top:268.72px;color:#111;font-size:11px;">Long_Metal_Bench_Brown_modo_base.lxo</div>
<svg style="left:1255px;top:289px;opacity:0.85" width="13" height="11" viewBox="0 0 13 11"><path d="M0.6 5.2 Q6 -1.2 12.4 4.8" fill="none" stroke="#5a6067" stroke-width="1.1"/><path d="M2.2 4 Q6.5 0.8 10.8 3.6" fill="none" stroke="#5a6067" stroke-width="0.8"/><path d="M0.8 6.4 Q6 11.6 12.4 5.6" fill="none" stroke="#5a6067" stroke-width="1.1"/><circle cx="6" cy="5.5" r="3.1" fill="#5a6067"/><circle cx="5.2" cy="4.6" r="0.85" fill="#c0c4c8"/></svg>
<svg style="left:1362px;top:287px" width="14" height="14" viewBox="0 0 14 14"><path d="M7 1 L13 3 L13 10 L7 13 L1 10 L1 3Z" fill="#7d9fc4" stroke="#5a6a7a" stroke-width="0.6"/><path d="M1 3 L7 5 L13 3 L7 1Z" fill="#c8dcf0"/><path d="M1 3 L7 5 L7 13 L1 10Z" fill="#a5c2e0"/></svg>
<div class="t" style="left:1377px;top:286.72px;color:#6f757c;font-size:11px;">Mesh</div>
<svg style="left:1255px;top:307px;opacity:0.85" width="13" height="11" viewBox="0 0 13 11"><path d="M0.6 5.2 Q6 -1.2 12.4 4.8" fill="none" stroke="#5a6067" stroke-width="1.1"/><path d="M2.2 4 Q6.5 0.8 10.8 3.6" fill="none" stroke="#5a6067" stroke-width="0.8"/><path d="M0.8 6.4 Q6 11.6 12.4 5.6" fill="none" stroke="#5a6067" stroke-width="1.1"/><circle cx="6" cy="5.5" r="3.1" fill="#5a6067"/><circle cx="5.2" cy="4.6" r="0.85" fill="#c0c4c8"/></svg>
<svg style="left:1342px;top:308px" width="8" height="8"><path d="M0.5 0 V7.5 L7.5 3.75Z" fill="#3e4650"/></svg>
<svg style="left:1362px;top:306px" width="14" height="12" viewBox="0 0 14 12"><path d="M1 1 H5 L6 2.5 H9 V10 H1Z" fill="#f4f4f4" stroke="#555" stroke-width="0.6"/><path d="M3 5 H13.5 L10 11 H1.5Z" fill="#6e6e6e" stroke="#444" stroke-width="0.6"/></svg>
<div class="t" style="left:1377px;top:304.72px;color:#111;font-size:11px;">Long_Metal_Bench_Brown</div>
<svg style="left:1255px;top:325px;opacity:0.85" width="13" height="11" viewBox="0 0 13 11"><path d="M0.6 5.2 Q6 -1.2 12.4 4.8" fill="none" stroke="#5a6067" stroke-width="1.1"/><path d="M2.2 4 Q6.5 0.8 10.8 3.6" fill="none" stroke="#5a6067" stroke-width="0.8"/><path d="M0.8 6.4 Q6 11.6 12.4 5.6" fill="none" stroke="#5a6067" stroke-width="1.1"/><circle cx="6" cy="5.5" r="3.1" fill="#5a6067"/><circle cx="5.2" cy="4.6" r="0.85" fill="#c0c4c8"/></svg>
<svg style="left:1363px;top:324px" width="13" height="13" viewBox="0 0 13 13"><path d="M1.5 3.5 L5 0.8 L12 7 L8 11Z" fill="#333"/><path d="M2 3 L5 1.2 L7 3 L3.5 5Z" fill="#eee"/><circle cx="9.5" cy="9.2" r="2.8" fill="#f4f49a" stroke="#555" stroke-width="0.6"/></svg>
<div class="t" style="left:1377px;top:322.72px;color:#111;font-size:11px;">Directional Light</div>
<svg style="left:1255px;top:343px;opacity:1" width="13" height="11" viewBox="0 0 13 11"><path d="M0.6 5.2 Q6 -1.2 12.4 4.8" fill="none" stroke="#111" stroke-width="1.1"/><path d="M2.2 4 Q6.5 0.8 10.8 3.6" fill="none" stroke="#111" stroke-width="0.8"/><path d="M0.8 6.4 Q6 11.6 12.4 5.6" fill="none" stroke="#111" stroke-width="1.1"/><circle cx="6" cy="5.5" r="3.1" fill="#111"/><circle cx="5.2" cy="4.6" r="0.85" fill="#fff"/></svg>
<svg style="left:1330px;top:345px" width="8" height="8"><path d="M0 0.5 H7.5 L3.75 7.5Z" fill="#3e4650"/><rect x="3.25" y="6" width="1" height="2" fill="#3e4650"/></svg>
<svg style="left:1350px;top:341px" width="14" height="13" viewBox="0 0 14 13"><rect x="1" y="5.5" width="12" height="7" fill="#111"/><path d="M1 5 L12 1.5 L12.8 3.5 L1.8 7Z" fill="#111"/><path d="M3 4.4 L4.5 5.8 M6 3.5 L7.5 4.9 M9 2.6 L10.5 4" stroke="#ddd" stroke-width="1"/><rect x="1" y="7.5" width="12" height="1.2" fill="#ccc"/></svg>
<div class="t" style="left:1366px;top:340.72px;color:#111;font-size:11px;font-weight:bold;letter-spacing:0.55px;">Wifi_Energy_Meter_Turned_Off_</div>
<div class="t" style="left:1561px;top:340.72px;color:#111;font-size:11px;font-weight:bold;">...</div>
<svg style="left:1255px;top:361px;opacity:1" width="13" height="11" viewBox="0 0 13 11"><path d="M0.6 5.2 Q6 -1.2 12.4 4.8" fill="none" stroke="#111" stroke-width="1.1"/><path d="M2.2 4 Q6.5 0.8 10.8 3.6" fill="none" stroke="#111" stroke-width="0.8"/><path d="M0.8 6.4 Q6 11.6 12.4 5.6" fill="none" stroke="#111" stroke-width="1.1"/><circle cx="6" cy="5.5" r="3.1" fill="#111"/><circle cx="5.2" cy="4.6" r="0.85" fill="#fff"/></svg>
<svg style="left:1362px;top:359px" width="14" height="14" viewBox="0 0 14 14"><path d="M7 1 L13 3 L13 10 L7 13 L1 10 L1 3Z" fill="#7d9fc4" stroke="#5a6a7a" stroke-width="0.6"/><path d="M1 3 L7 5 L13 3 L7 1Z" fill="#c8dcf0"/><path d="M1 3 L7 5 L7 13 L1 10Z" fill="#a5c2e0"/></svg>
<div class="t" style="left:1377px;top:358.72px;color:#6f757c;font-size:11px;">Mesh</div>
<svg style="left:1255px;top:379px;opacity:1" width="13" height="11" viewBox="0 0 13 11"><path d="M0.6 5.2 Q6 -1.2 12.4 4.8" fill="none" stroke="#111" stroke-width="1.1"/><path d="M2.2 4 Q6.5 0.8 10.8 3.6" fill="none" stroke="#111" stroke-width="0.8"/><path d="M0.8 6.4 Q6 11.6 12.4 5.6" fill="none" stroke="#111" stroke-width="1.1"/><circle cx="6" cy="5.5" r="3.1" fill="#111"/><circle cx="5.2" cy="4.6" r="0.85" fill="#fff"/></svg>
<svg style="left:1342px;top:380px" width="8" height="8"><path d="M0.5 0 V7.5 L7.5 3.75Z" fill="#3e4650"/></svg>
<svg style="left:1362px;top:378px" width="14" height="12" viewBox="0 0 14 12"><path d="M1 1 H5 L6 2.5 H9 V10 H1Z" fill="#f4f4f4" stroke="#555" stroke-width="0.6"/><path d="M3 5 H13.5 L10 11 H1.5Z" fill="#6e6e6e" stroke="#444" stroke-width="0.6"/></svg>
<div class="t" style="left:1377px;top:376.72px;color:#111;font-size:11px;">Wifi_Energy_Meter_Turned_Off</div>
<svg style="left:1255px;top:397px;opacity:1" width="13" height="11" viewBox="0 0 13 11"><path d="M0.6 5.2 Q6 -1.2 12.4 4.8" fill="none" stroke="#111" stroke-width="1.1"/><path d="M2.2 4 Q6.5 0.8 10.8 3.6" fill="none" stroke="#111" stroke-width="0.8"/><path d="M0.8 6.4 Q6 11.6 12.4 5.6" fill="none" stroke="#111" stroke-width="1.1"/><circle cx="6" cy="5.5" r="3.1" fill="#111"/><circle cx="5.2" cy="4.6" r="0.85" fill="#fff"/></svg>
<svg style="left:1363px;top:396px" width="13" height="13" viewBox="0 0 13 13"><path d="M1.5 3.5 L5 0.8 L12 7 L8 11Z" fill="#333"/><path d="M2 3 L5 1.2 L7 3 L3.5 5Z" fill="#eee"/><circle cx="9.5" cy="9.2" r="2.8" fill="#f4f49a" stroke="#555" stroke-width="0.6"/></svg>
<div class="t" style="left:1377px;top:394.72px;color:#111;font-size:11px;">Directional Light</div>
<div class="t" style="left:1480px;top:160.72px;color:#6f757c;font-size:11px;">(2)</div>
<div class="t" style="left:1507px;top:304.72px;color:#6f757c;font-size:11px;">(2)</div>
<div class="t" style="left:1534px;top:376.72px;color:#6f757c;font-size:11px;">(2)</div>
<div class="a" style="left:1333px;top:141px;width:1px;height:45px;background:repeating-linear-gradient(#404850 0 1px,transparent 1px 3px);"></div>
<div class="a" style="left:1333px;top:206px;width:1px;height:52px;background:repeating-linear-gradient(#404850 0 1px,transparent 1px 3px);"></div>
<div class="a" style="left:1333px;top:278px;width:1px;height:52px;background:repeating-linear-gradient(#404850 0 1px,transparent 1px 3px);"></div>
<div class="a" style="left:1333px;top:350px;width:1px;height:52px;background:repeating-linear-gradient(#404850 0 1px,transparent 1px 3px);"></div>
<div class="a" style="left:1334px;top:150px;width:6px;height:1px;background:repeating-linear-gradient(90deg,#404850 0 1px,transparent 1px 2px);"></div>
<div class="a" style="left:1341px;top:149px;width:3px;height:3px;background:#6a7280;"></div>
<div class="a" style="left:1334px;top:168px;width:6px;height:1px;background:repeating-linear-gradient(90deg,#404850 0 1px,transparent 1px 2px);"></div>
<div class="a" style="left:1334px;top:186px;width:6px;height:1px;background:repeating-linear-gradient(90deg,#404850 0 1px,transparent 1px 2px);"></div>
<div class="a" style="left:1341px;top:185px;width:3px;height:3px;background:#6a7280;"></div>
<div class="a" style="left:1334px;top:222px;width:6px;height:1px;background:repeating-linear-gradient(90deg,#404850 0 1px,transparent 1px 2px);"></div>
<div class="a" style="left:1341px;top:221px;width:3px;height:3px;background:#6a7280;"></div>
<div class="a" style="left:1334px;top:240px;width:6px;height:1px;background:repeating-linear-gradient(90deg,#404850 0 1px,transparent 1px 2px);"></div>
<div class="a" style="left:1334px;top:258px;width:6px;height:1px;background:repeating-linear-gradient(90deg,#404850 0 1px,transparent 1px 2px);"></div>
<div class="a" style="left:1341px;top:257px;width:3px;height:3px;background:#6a7280;"></div>
<div class="a" style="left:1334px;top:294px;width:6px;height:1px;background:repeating-linear-gradient(90deg,#404850 0 1px,transparent 1px 2px);"></div>
<div class="a" style="left:1341px;top:293px;width:3px;height:3px;background:#6a7280;"></div>
<div class="a" style="left:1334px;top:312px;width:6px;height:1px;background:repeating-linear-gradient(90deg,#404850 0 1px,transparent 1px 2px);"></div>
<div class="a" style="left:1334px;top:330px;width:6px;height:1px;background:repeating-linear-gradient(90deg,#404850 0 1px,transparent 1px 2px);"></div>
<div class="a" style="left:1341px;top:329px;width:3px;height:3px;background:#6a7280;"></div>
<div class="a" style="left:1334px;top:366px;width:6px;height:1px;background:repeating-linear-gradient(90deg,#404850 0 1px,transparent 1px 2px);"></div>
<div class="a" style="left:1341px;top:365px;width:3px;height:3px;background:#6a7280;"></div>
<div class="a" style="left:1334px;top:384px;width:6px;height:1px;background:repeating-linear-gradient(90deg,#404850 0 1px,transparent 1px 2px);"></div>
<div class="a" style="left:1334px;top:402px;width:6px;height:1px;background:repeating-linear-gradient(90deg,#404850 0 1px,transparent 1px 2px);"></div>
<div class="a" style="left:1341px;top:401px;width:3px;height:3px;background:#6a7280;"></div>
<div class="a" style="left:1246px;top:445px;width:347px;height:21px;background:#282828;"></div>
<svg style="left:1250px;top:452px" width="9" height="9"><circle cx="4.5" cy="4.5" r="4" fill="#111" stroke="#3a3a3a"/></svg>
<div class="a" style="left:1264px;top:450px;width:51px;height:16px;background:#484848;border-radius:7px 7px 0 0"></div>
<div class="t" style="left:1271px;top:451.22px;color:#f0a030;font-size:11px;">Shading</div>
<div class="a" style="left:1321px;top:451px;width:55px;height:15px;background:#373737;border-radius:7px 7px 0 0"></div>
<div class="t" style="left:1327px;top:451.22px;color:#a9b1b9;font-size:11px;">Channels</div>
<div class="a" style="left:1382px;top:451px;width:88px;height:15px;background:#373737;border-radius:7px 7px 0 0"></div>
<div class="t" style="left:1387px;top:451.22px;color:#a9b1b9;font-size:11px;">Info &amp; Statistics</div>
<div class="t" style="left:1475px;top:450.26px;color:#a0a0a0;font-size:13px;">+</div>
<svg style="left:1549px;top:451px" width="12" height="12"><path d="M5.5 0.5 H11.5 V6.5 Z M0.5 5.5 V11.5 H6.5 Z" fill="#b0b0b0"/><path d="M9.5 2.5 L2.5 9.5" stroke="#b0b0b0" stroke-width="2.2"/></svg>
<svg style="left:1565px;top:451px" width="12" height="12" viewBox="0 0 12 12"><circle cx="6.0" cy="6.0" r="4.800000000000001" fill="none" stroke="#bdbdbd" stroke-width="2.4000000000000004" stroke-dasharray="1.88"/><circle cx="6.0" cy="6.0" r="3.7199999999999998" fill="#bdbdbd"/><circle cx="6.0" cy="6.0" r="1.32" fill="#2a2a2a"/></svg>
<svg style="left:1584px;top:452px" width="6" height="10"><path d="M0 0 L6 5 L0 10Z" fill="#b0b0b0"/></svg>
<div class="a" style="left:1246px;top:466px;width:347px;height:686px;background:#4a4a4a;"></div>
<div class="a" style="left:1246px;top:466px;width:1px;height:686px;background:#555;"></div>
<div class="t" style="left:1253px;top:471.72px;color:#c8d0d8;font-size:11px;">View</div>
<div class="t" style="left:1252px;top:492.72px;color:#c8d0d8;font-size:11px;">Filter</div>
<div class="a" style="left:1279px;top:470px;width:129px;height:17px;background:#5b5b5b;border:1px solid #373737;border-radius:6px"></div>
<div class="t" style="left:1284px;top:471.72px;color:#dcdcdc;font-size:11px;">Shader Tree</div>
<svg style="left:1396px;top:476px" width="8" height="5"><path d="M0 0 H8 L4 5Z" fill="#e0e0e0"/></svg>
<div class="a" style="left:1412px;top:470px;width:156px;height:17px;background:#5b5b5b;border:1px solid #373737;border-radius:6px"></div>
<div class="t" style="left:1415px;top:471.72px;color:#dcdcdc;font-size:11px;">Assign Material</div>
<div class="a" style="left:1571px;top:470px;width:17px;height:17px;background:#5b5b5b;border:1px solid #373737;border-radius:6px"></div>
<div class="t" style="left:1575px;top:471.72px;color:#dcdcdc;font-size:11px;">F</div>
<div class="a" style="left:1279px;top:491px;width:129px;height:17px;background:#5b5b5b;border:1px solid #373737;border-radius:6px"></div>
<div class="t" style="left:1284px;top:492.72px;color:#dcdcdc;font-size:11px;">(none)</div>
<svg style="left:1396px;top:497px" width="8" height="5"><path d="M0 0 H8 L4 5Z" fill="#e0e0e0"/></svg>
<div class="a" style="left:1412px;top:491px;width:156px;height:17px;background:#5b5b5b;border:1px solid #373737;border-radius:6px"></div>
<div class="t" style="left:1417px;top:492.72px;color:#dcdcdc;font-size:11px;">Add Layer</div>
<svg style="left:1555px;top:497px" width="8" height="5"><path d="M0 0 H8 L4 5Z" fill="#e0e0e0"/></svg>
<div class="a" style="left:1571px;top:491px;width:17px;height:17px;background:#5b5b5b;border:1px solid #373737;border-radius:6px"></div>
<div class="t" style="left:1575px;top:492.72px;color:#dcdcdc;font-size:11px;">S</div>
<div class="a" style="left:1251px;top:512px;width:337px;height:635px;background:#5e5e5e;border-radius:8px 8px 8px 8px"></div>
<div class="a" style="left:1251px;top:512px;width:323px;height:18px;background:#68737e;border-radius:8px 0 0 0"></div>
<div class="a" style="left:1251px;top:529px;width:323px;height:1px;background:#4a545e;"></div>
<div class="a" style="left:1251px;top:530px;width:323px;height:18px;background:linear-gradient(#979ea6,#90979f);"></div>
<div class="a" style="left:1251px;top:548px;width:323px;height:18px;background:linear-gradient(#959ca4,#8f969e);"></div>
<div class="a" style="left:1251px;top:566px;width:323px;height:18px;background:linear-gradient(#979ea6,#90979f);"></div>
<div class="a" style="left:1251px;top:584px;width:323px;height:18px;background:linear-gradient(#959ca4,#8f969e);"></div>
<div class="a" style="left:1251px;top:602px;width:323px;height:18px;background:linear-gradient(#979ea6,#90979f);"></div>
<div class="a" style="left:1251px;top:620px;width:323px;height:18px;background:linear-gradient(#959ca4,#8f969e);"></div>
<div class="a" style="left:1251px;top:638px;width:323px;height:18px;background:linear-gradient(#979ea6,#90979f);"></div>
<div class="a" style="left:1251px;top:656px;width:323px;height:18px;background:linear-gradient(#959ca4,#8f969e);"></div>
<div class="a" style="left:1251px;top:674px;width:323px;height:18px;background:linear-gradient(#979ea6,#90979f);"></div>
<div class="a" style="left:1251px;top:692px;width:323px;height:18px;background:linear-gradient(#959ca4,#8f969e);"></div>
<div class="a" style="left:1251px;top:710px;width:323px;height:18px;background:linear-gradient(#979ea6,#90979f);"></div>
<div class="a" style="left:1251px;top:728px;width:323px;height:18px;background:linear-gradient(#959ca4,#8f969e);"></div>
<div class="a" style="left:1251px;top:746px;width:323px;height:18px;background:#91989f;"></div>
<div class="a" style="left:1251px;top:764px;width:323px;height:18px;background:#91989f;"></div>
<div class="a" style="left:1251px;top:782px;width:323px;height:18px;background:#91989f;"></div>
<div class="a" style="left:1251px;top:800px;width:323px;height:18px;background:#91989f;"></div>
<div class="a" style="left:1251px;top:818px;width:323px;height:18px;background:#91989f;"></div>
<div class="a" style="left:1251px;top:836px;width:323px;height:18px;background:#91989f;"></div>
<div class="a" style="left:1251px;top:854px;width:323px;height:18px;background:#91989f;"></div>
<div class="a" style="left:1251px;top:872px;width:323px;height:18px;background:#91989f;"></div>
<div class="a" style="left:1251px;top:890px;width:323px;height:18px;background:#91989f;"></div>
<div class="a" style="left:1251px;top:908px;width:323px;height:18px;background:#91989f;"></div>
<div class="a" style="left:1251px;top:926px;width:323px;height:18px;background:#91989f;"></div>
<div class="a" style="left:1251px;top:944px;width:323px;height:18px;background:#91989f;"></div>
<div class="a" style="left:1251px;top:962px;width:323px;height:18px;background:#91989f;"></div>
<div class="a" style="left:1251px;top:980px;width:323px;height:18px;background:#91989f;"></div>
<div class="a" style="left:1251px;top:998px;width:323px;height:18px;background:#91989f;"></div>
<div class="a" style="left:1251px;top:1016px;width:323px;height:18px;background:#91989f;"></div>
<div class="a" style="left:1251px;top:1034px;width:323px;height:18px;background:#91989f;"></div>
<div class="a" style="left:1251px;top:1052px;width:323px;height:18px;background:#91989f;"></div>
<div class="a" style="left:1251px;top:1070px;width:323px;height:18px;background:#91989f;"></div>
<div class="a" style="left:1251px;top:1088px;width:323px;height:18px;background:#91989f;"></div>
<div class="a" style="left:1251px;top:1106px;width:323px;height:18px;background:#91989f;"></div>
<div class="a" style="left:1251px;top:1124px;width:323px;height:18px;background:#91989f;"></div>
<div class="a" style="left:1251px;top:1142px;width:323px;height:5px;background:#91989f;"></div>
<div class="a" style="left:1251px;top:1137px;width:323px;height:10px;background:#91989f;border-radius:0 0 0 8px"></div>
<div class="a" style="left:1275px;top:512px;width:1px;height:635px;background:#5f6973;"></div>
<div class="a" style="left:1473px;top:512px;width:1px;height:635px;background:#5f6973;"></div>
<svg style="left:1256px;top:517px;opacity:1" width="13" height="11" viewBox="0 0 13 11"><path d="M0.6 5.2 Q6 -1.2 12.4 4.8" fill="none" stroke="#111" stroke-width="1.1"/><path d="M2.2 4 Q6.5 0.8 10.8 3.6" fill="none" stroke="#111" stroke-width="0.8"/><path d="M0.8 6.4 Q6 11.6 12.4 5.6" fill="none" stroke="#111" stroke-width="1.1"/><circle cx="6" cy="5.5" r="3.1" fill="#111"/><circle cx="5.2" cy="4.6" r="0.85" fill="#fff"/></svg>
<div class="t" style="left:1290px;top:514.22px;color:#c6d0da;font-size:11px;">Name</div>
<div class="t" style="left:1476px;top:514.22px;color:#c6d0da;font-size:11px;">Effect</div>
<svg style="left:1280px;top:536px" width="8" height="8"><path d="M0 0.5 H7.5 L3.75 7.5Z" fill="#3e4650"/><rect x="3.25" y="6" width="1" height="2" fill="#3e4650"/></svg>
<svg style="left:1300px;top:533px" width="13" height="13"><defs><radialGradient id="sr" cx="0.38" cy="0.3" r="0.75"><stop offset="0" stop-color="#e0e0ff"/><stop offset="0.45" stop-color="#6a6ad0"/><stop offset="1" stop-color="#20206a"/></radialGradient></defs><circle cx="6.5" cy="6.5" r="6.2" fill="url(#sr)"/></svg>
<div class="t" style="left:1318px;top:531.72px;color:#111;font-size:11px;">Render</div>
<svg style="left:1256px;top:552px;opacity:1" width="13" height="11" viewBox="0 0 13 11"><path d="M0.6 5.2 Q6 -1.2 12.4 4.8" fill="none" stroke="#111" stroke-width="1.1"/><path d="M2.2 4 Q6.5 0.8 10.8 3.6" fill="none" stroke="#111" stroke-width="0.8"/><path d="M0.8 6.4 Q6 11.6 12.4 5.6" fill="none" stroke="#111" stroke-width="1.1"/><circle cx="6" cy="5.5" r="3.1" fill="#111"/><circle cx="5.2" cy="4.6" r="0.85" fill="#fff"/></svg>
<svg style="left:1312px;top:551px" width="13" height="11" viewBox="0 0 13 11"><rect x="0.5" y="0.5" width="12" height="10" fill="#eee" stroke="#888" stroke-width="0.6"/><rect x="2" y="2" width="9" height="7" fill="#e0a800"/><path d="M2 9 L5 4 L8 9Z M6 9 L9 6 L11 9Z" fill="#222"/><circle cx="6" cy="4" r="1.3" fill="#222"/></svg>
<div class="t" style="left:1330px;top:549.72px;color:#111;font-size:11px;">Alpha Output</div>
<svg style="left:1564px;top:555px" width="8" height="5"><path d="M0 0 H8 L4 5Z" fill="#111"/></svg>
<div class="t" style="left:1476px;top:549.72px;color:#111;font-size:11px;">Alpha</div>
<svg style="left:1256px;top:570px;opacity:1" width="13" height="11" viewBox="0 0 13 11"><path d="M0.6 5.2 Q6 -1.2 12.4 4.8" fill="none" stroke="#111" stroke-width="1.1"/><path d="M2.2 4 Q6.5 0.8 10.8 3.6" fill="none" stroke="#111" stroke-width="0.8"/><path d="M0.8 6.4 Q6 11.6 12.4 5.6" fill="none" stroke="#111" stroke-width="1.1"/><circle cx="6" cy="5.5" r="3.1" fill="#111"/><circle cx="5.2" cy="4.6" r="0.85" fill="#fff"/></svg>
<svg style="left:1312px;top:569px" width="13" height="11" viewBox="0 0 13 11"><rect x="0.5" y="0.5" width="12" height="10" fill="#eee" stroke="#888" stroke-width="0.6"/><rect x="2" y="2" width="9" height="7" fill="#e0a800"/><path d="M2 9 L5 4 L8 9Z M6 9 L9 6 L11 9Z" fill="#222"/><circle cx="6" cy="4" r="1.3" fill="#222"/></svg>
<div class="t" style="left:1330px;top:567.72px;color:#111;font-size:11px;">Final Color Output</div>
<svg style="left:1564px;top:573px" width="8" height="5"><path d="M0 0 H8 L4 5Z" fill="#111"/></svg>
<div class="t" style="left:1476px;top:567.72px;color:#111;font-size:11px;">Final Color</div>
<svg style="left:1256px;top:588px;opacity:1" width="13" height="11" viewBox="0 0 13 11"><path d="M0.6 5.2 Q6 -1.2 12.4 4.8" fill="none" stroke="#111" stroke-width="1.1"/><path d="M2.2 4 Q6.5 0.8 10.8 3.6" fill="none" stroke="#111" stroke-width="0.8"/><path d="M0.8 6.4 Q6 11.6 12.4 5.6" fill="none" stroke="#111" stroke-width="1.1"/><circle cx="6" cy="5.5" r="3.1" fill="#111"/><circle cx="5.2" cy="4.6" r="0.85" fill="#fff"/></svg>
<svg style="left:1292px;top:589px" width="8" height="8"><path d="M0.5 0 V7.5 L7.5 3.75Z" fill="#3e4650"/></svg>
<svg style="left:1312px;top:586px" width="11" height="11"><defs><radialGradient id="sg1" cx="0.38" cy="0.3" r="0.75"><stop offset="0" stop-color="#d0f0d0"/><stop offset="0.45" stop-color="#50a060"/><stop offset="1" stop-color="#204a20"/></radialGradient></defs><circle cx="5.5" cy="5.5" r="5.2" fill="url(#sg1)"/></svg>
<svg style="left:1316px;top:590px" width="10" height="10"><defs><radialGradient id="sr1" cx="0.38" cy="0.3" r="0.75"><stop offset="0" stop-color="#ffb0b0"/><stop offset="0.45" stop-color="#e03030"/><stop offset="1" stop-color="#801010"/></radialGradient></defs><circle cx="5.0" cy="5.0" r="4.7" fill="url(#sr1)"/></svg>
<div class="t" style="left:1330px;top:585.72px;color:#111;font-size:11px;">Wifi_Energy_Meter_Turne ...</div>
<svg style="left:1564px;top:591px" width="8" height="5"><path d="M0 0 H8 L4 5Z" fill="#111"/></svg>
<svg style="left:1256px;top:606px;opacity:1" width="13" height="11" viewBox="0 0 13 11"><path d="M0.6 5.2 Q6 -1.2 12.4 4.8" fill="none" stroke="#111" stroke-width="1.1"/><path d="M2.2 4 Q6.5 0.8 10.8 3.6" fill="none" stroke="#111" stroke-width="0.8"/><path d="M0.8 6.4 Q6 11.6 12.4 5.6" fill="none" stroke="#111" stroke-width="1.1"/><circle cx="6" cy="5.5" r="3.1" fill="#111"/><circle cx="5.2" cy="4.6" r="0.85" fill="#fff"/></svg>
<svg style="left:1312px;top:605px" width="13" height="13"><defs><radialGradient id="sw" cx="0.38" cy="0.3" r="0.75"><stop offset="0" stop-color="#ffffff"/><stop offset="0.45" stop-color="#c0c0c0"/><stop offset="1" stop-color="#505050"/></radialGradient></defs><circle cx="6.5" cy="6.5" r="6.2" fill="url(#sw)"/></svg>
<div class="t" style="left:1330px;top:603.72px;color:#111;font-size:11px;">Base Shader</div>
<svg style="left:1564px;top:609px" width="8" height="5"><path d="M0 0 H8 L4 5Z" fill="#111"/></svg>
<div class="t" style="left:1476px;top:603.72px;color:#111;font-size:11px;">Full Shading</div>
<svg style="left:1256px;top:624px;opacity:1" width="13" height="11" viewBox="0 0 13 11"><path d="M0.6 5.2 Q6 -1.2 12.4 4.8" fill="none" stroke="#111" stroke-width="1.1"/><path d="M2.2 4 Q6.5 0.8 10.8 3.6" fill="none" stroke="#111" stroke-width="0.8"/><path d="M0.8 6.4 Q6 11.6 12.4 5.6" fill="none" stroke="#111" stroke-width="1.1"/><circle cx="6" cy="5.5" r="3.1" fill="#111"/><circle cx="5.2" cy="4.6" r="0.85" fill="#fff"/></svg>
<svg style="left:1312px;top:623px" width="13" height="13"><defs><radialGradient id="sg" cx="0.38" cy="0.3" r="0.75"><stop offset="0" stop-color="#d8f0d8"/><stop offset="0.45" stop-color="#70b080"/><stop offset="1" stop-color="#2a5a3a"/></radialGradient></defs><circle cx="6.5" cy="6.5" r="6.2" fill="url(#sg)"/></svg>
<div class="t" style="left:1330px;top:621.72px;color:#111;font-size:11px;">Base Material</div>
<svg style="left:1564px;top:627px" width="8" height="5"><path d="M0 0 H8 L4 5Z" fill="#111"/></svg>
<div class="t" style="left:1476px;top:621.72px;color:#111;font-size:11px;">(all)</div>
<div class="a" style="left:1283px;top:548px;width:1px;height:64px;background:repeating-linear-gradient(#404850 0 1px,transparent 1px 3px);"></div>
<div class="a" style="left:1284px;top:557px;width:6px;height:1px;background:repeating-linear-gradient(90deg,#404850 0 1px,transparent 1px 2px);"></div>
<div class="a" style="left:1291px;top:556px;width:3px;height:3px;background:#6a7280;"></div>
<div class="a" style="left:1284px;top:575px;width:6px;height:1px;background:repeating-linear-gradient(90deg,#404850 0 1px,transparent 1px 2px);"></div>
<div class="a" style="left:1291px;top:574px;width:3px;height:3px;background:#6a7280;"></div>
<div class="a" style="left:1284px;top:593px;width:6px;height:1px;background:repeating-linear-gradient(90deg,#404850 0 1px,transparent 1px 2px);"></div>
<div class="a" style="left:1284px;top:611px;width:6px;height:1px;background:repeating-linear-gradient(90deg,#404850 0 1px,transparent 1px 2px);"></div>
<div class="a" style="left:1291px;top:610px;width:3px;height:3px;background:#6a7280;"></div>
<div class="a" style="left:1284px;top:629px;width:6px;height:1px;background:repeating-linear-gradient(90deg,#404850 0 1px,transparent 1px 2px);"></div>
<div class="a" style="left:1291px;top:628px;width:3px;height:3px;background:#6a7280;"></div>
<div class="a" style="left:1283px;top:548px;width:1px;height:81px;background:repeating-linear-gradient(#404850 0 1px,transparent 1px 3px);"></div>
<svg style="left:1300px;top:641px" width="14" height="12" viewBox="0 0 14 12"><path d="M1 1 H5 L6 2.5 H9 V10 H1Z" fill="#f4f4f4" stroke="#555" stroke-width="0.6"/><path d="M3 5 H13.5 L10 11 H1.5Z" fill="#6e6e6e" stroke="#444" stroke-width="0.6"/></svg>
<div class="t" style="left:1318px;top:639.72px;color:#111;font-size:11px;">Library</div>
<svg style="left:1300px;top:659px" width="14" height="12" viewBox="0 0 14 12"><path d="M1 1 H5 L6 2.5 H9 V10 H1Z" fill="#f4f4f4" stroke="#555" stroke-width="0.6"/><path d="M3 5 H13.5 L10 11 H1.5Z" fill="#6e6e6e" stroke="#444" stroke-width="0.6"/></svg>
<div class="t" style="left:1318px;top:657.72px;color:#111;font-size:11px;">Nodes</div>
<svg style="left:1280px;top:679px" width="8" height="8"><path d="M0.5 0 V7.5 L7.5 3.75Z" fill="#4a525c"/></svg>
<div class="t" style="left:1302px;top:675.72px;color:#111;font-size:11px;">Lights</div>
<svg style="left:1280px;top:697px" width="8" height="8"><path d="M0.5 0 V7.5 L7.5 3.75Z" fill="#4a525c"/></svg>
<div class="t" style="left:1302px;top:693.72px;color:#111;font-size:11px;">Environments</div>
<div class="t" style="left:1302px;top:711.72px;color:#111;font-size:11px;">Bake Items</div>
<svg style="left:1300px;top:730px" width="14" height="13" viewBox="0 0 14 13"><rect x="1" y="5.5" width="12" height="7" fill="#111"/><path d="M1 5 L12 1.5 L12.8 3.5 L1.8 7Z" fill="#111"/><path d="M3 4.4 L4.5 5.8 M6 3.5 L7.5 4.9 M9 2.6 L10.5 4" stroke="#ddd" stroke-width="1"/><rect x="1" y="7.5" width="12" height="1.2" fill="#ccc"/></svg>
<div class="t" style="left:1318px;top:729.72px;color:#111;font-size:11px;">FX</div>
<div class="a" style="left:1574px;top:512px;width:14px;height:635px;background:#5e5e5e;border-radius:0 8px 8px 0"></div>
<div class="a" style="left:1574px;top:512px;width:14px;height:635px;background:#5f5f5f;border-radius:0 8px 8px 0"></div>
<svg style="left:1578px;top:824px" width="7" height="7"><circle cx="3.5" cy="3.5" r="3" fill="#555" stroke="#6a6a6a" stroke-width="0.8"/></svg>
<div class="a" style="left:1593px;top:78px;width:4px;height:1074px;background:#2b2b2b;"></div>
<div class="a" style="left:1597px;top:78px;width:323px;height:84px;background:#4a4a4a;"></div>
<div class="a" style="left:1597px;top:78px;width:323px;height:1px;background:#5a5a5a;"></div>
<div class="t" style="right:212px;top:85.72px;color:#9a9a9a;font-size:11px;">Pass Groups</div>
<div class="t" style="right:212px;top:106.72px;color:#9a9a9a;font-size:11px;">Passes</div>
<div class="a" style="left:1713px;top:84px;width:201px;height:17px;background:#5a5a5a;border:1px solid #383838;border-radius:6px"></div>
<div class="a" style="left:1835px;top:85px;width:1px;height:15px;background:#474747;"></div>
<div class="t" style="left:1734px;top:85.72px;color:#8c8c8c;font-size:11px;">(none)</div>
<svg style="left:1823px;top:90px" width="8" height="5"><path d="M0 0 H8 L4 5Z" fill="#9a9a9a"/></svg>
<div class="t" style="left:1836px;width:78px;text-align:center;top:85.72px;color:#e8e8e8;font-size:11px;">New</div>
<div class="a" style="left:1713px;top:105px;width:201px;height:17px;background:#5a5a5a;border:1px solid #383838;border-radius:6px"></div>
<div class="a" style="left:1835px;top:106px;width:1px;height:15px;background:#474747;"></div>
<div class="t" style="left:1734px;top:106.72px;color:#8c8c8c;font-size:11px;">(none)</div>
<svg style="left:1823px;top:111px" width="8" height="5"><path d="M0 0 H8 L4 5Z" fill="#9a9a9a"/></svg>
<div class="t" style="left:1836px;width:78px;text-align:center;top:106.72px;color:#8a8a8a;font-size:11px;">New</div>
<div class="a" style="left:1602px;top:128px;width:313px;height:1px;background:#3a3a3a;"></div>
<div class="a" style="left:1602px;top:129px;width:313px;height:1px;background:#575757;"></div>
<div class="a" style="left:1599px;top:134px;width:104px;height:22px;background:#5b5b5b;border:1px solid #373737;border-radius:6px"></div>
<svg style="left:1602px;top:137px" width="16" height="16" viewBox="0 0 16 16"><path d="M13 4 A6.5 6.5 0 1 0 14 10" fill="none" stroke="#60e060" stroke-width="1.8"/><path d="M11 2 L14.5 4.5 L11.5 6.5Z" fill="#60e060"/><path d="M8 4.5 V11.5 M4.5 8 H11.5" stroke="#60e060" stroke-width="1.8"/></svg>
<div class="t" style="left:1622px;top:138.72px;color:#dcdcdc;font-size:11px;">Auto Add</div>
<div class="a" style="left:1706px;top:134px;width:208px;height:22px;background:#5b5b5b;border:1px solid #373737;border-radius:6px"></div>
<div class="a" style="left:1810px;top:135px;width:1px;height:20px;background:#474747;"></div>
<svg style="left:1709px;top:138px" width="15" height="15"><circle cx="7.5" cy="7.5" r="7" fill="#333"/><path d="M6 3 H9 V7 H11.5 L7.5 12 L3.5 7 H6Z" fill="#90e070"/></svg>
<div class="t" style="left:1729px;top:138.72px;color:#dcdcdc;font-size:11px;">Apply</div>
<svg style="left:1813px;top:138px" width="15" height="15"><circle cx="7.5" cy="7.5" r="7" fill="#333"/><path d="M4.5 4.5 L10.5 10.5 M10.5 4.5 L4.5 10.5" stroke="#f04040" stroke-width="2.2"/></svg>
<div class="t" style="left:1832px;top:138.72px;color:#dcdcdc;font-size:11px;">Discard</div>
<div class="a" style="left:1597px;top:162px;width:323px;height:20px;background:#282828;"></div>
<svg style="left:1597px;top:170px" width="9" height="9"><circle cx="4.5" cy="4.5" r="4" fill="#111" stroke="#3a3a3a"/></svg>
<div class="a" style="left:1611px;top:166px;width:62px;height:16px;background:#373737;border-radius:7px 7px 0 0"></div>
<div class="t" style="left:1616px;top:167.72px;color:#a9b1b9;font-size:11px;">Properties</div>
<div class="a" style="left:1677px;top:165px;width:52px;height:17px;background:#484848;border-radius:7px 7px 0 0"></div>
<div class="t" style="left:1686px;top:167.72px;color:#f0a030;font-size:11px;">Groups</div>
<div class="t" style="left:1734px;top:166.26px;color:#a0a0a0;font-size:13px;">+</div>
<svg style="left:1892px;top:167px" width="12" height="12"><path d="M5.5 0.5 H11.5 V6.5 Z M0.5 5.5 V11.5 H6.5 Z" fill="#b0b0b0"/><path d="M9.5 2.5 L2.5 9.5" stroke="#b0b0b0" stroke-width="2.2"/></svg>
<svg style="left:1909px;top:168px" width="6" height="10"><path d="M0 0 L6 5 L0 10Z" fill="#b0b0b0"/></svg>
<div class="a" style="left:1597px;top:182px;width:323px;height:936px;background:#4a4a4a;"></div>
<div class="a" style="left:1598px;top:187px;width:78px;height:15px;background:#5b5b5b;border:1px solid #373737;border-radius:6px"></div>
<div class="t" style="left:1600px;top:188.22px;color:#dcdcdc;font-size:11px;">New Group</div>
<div class="a" style="left:1598px;top:206px;width:317px;height:906px;background:#5e5e5e;border-radius:8px"></div>
<div class="a" style="left:1901px;top:206px;width:14px;height:906px;background:#5f5f5f;border-radius:0 8px 8px 0"></div>
<div class="a" style="left:1598px;top:206px;width:303px;height:19px;background:#68737e;border-radius:8px 0 0 0"></div>
<div class="a" style="left:1598px;top:224px;width:303px;height:1px;background:#4a545e;"></div>
<div class="a" style="left:1598px;top:225px;width:303px;height:30px;background:linear-gradient(#9aa2aa,#939aa2);"></div>
<div class="a" style="left:1598px;top:255px;width:303px;height:857px;background:#91989f;border-radius:0 0 0 8px"></div>
<div class="a" style="left:1618px;top:206px;width:1px;height:906px;background:#5f6973;"></div>
<div class="a" style="left:1639px;top:206px;width:1px;height:906px;background:#5f6973;"></div>
<div class="a" style="left:1660px;top:206px;width:1px;height:906px;background:#5f6973;"></div>
<div class="a" style="left:1681px;top:206px;width:1px;height:906px;background:#5f6973;"></div>
<svg style="left:1601px;top:210px;opacity:1" width="13" height="11" viewBox="0 0 13 11"><path d="M0.6 5.2 Q6 -1.2 12.4 4.8" fill="none" stroke="#111" stroke-width="1.1"/><path d="M2.2 4 Q6.5 0.8 10.8 3.6" fill="none" stroke="#111" stroke-width="0.8"/><path d="M0.8 6.4 Q6 11.6 12.4 5.6" fill="none" stroke="#111" stroke-width="1.1"/><circle cx="6" cy="5.5" r="3.1" fill="#111"/><circle cx="5.2" cy="4.6" r="0.85" fill="#fff"/></svg>
<svg style="left:1622px;top:209px" width="14" height="12"><rect x="1" y="3" width="10" height="7" rx="1" fill="#e8e8e8" stroke="#444" stroke-width="0.6"/><rect x="3" y="1" width="4" height="3" fill="#ddd"/><circle cx="9" cy="7.5" r="3.5" fill="#111"/><circle cx="8.5" cy="7" r="1" fill="#888"/></svg>
<svg style="left:1644px;top:209px" width="12" height="12"><path d="M6 1 L11 3.5 V9 L6 11.5 L1 9 V3.5Z M1 3.5 L6 6 L11 3.5 M6 6 V11.5" fill="none" stroke="#222" stroke-width="0.9"/></svg>
<svg style="left:1665px;top:209px" width="12" height="12"><path d="M6 1 L11 3.5 V9 L6 11.5 L1 9 V3.5Z" fill="#eee" stroke="#333" stroke-width="0.9"/><path d="M1 3.5 L6 6 L11 3.5 M6 6 V11.5" fill="none" stroke="#333" stroke-width="0.9"/></svg>
<div class="t" style="left:1696px;top:208.22px;color:#c6d0da;font-size:11px;">Name</div>
<svg style="left:1601px;top:235px;opacity:0.85" width="13" height="11" viewBox="0 0 13 11"><path d="M0.6 5.2 Q6 -1.2 12.4 4.8" fill="none" stroke="#5a6067" stroke-width="1.1"/><path d="M2.2 4 Q6.5 0.8 10.8 3.6" fill="none" stroke="#5a6067" stroke-width="0.8"/><path d="M0.8 6.4 Q6 11.6 12.4 5.6" fill="none" stroke="#5a6067" stroke-width="1.1"/><circle cx="6" cy="5.5" r="3.1" fill="#5a6067"/><circle cx="5.2" cy="4.6" r="0.85" fill="#c0c4c8"/></svg>
<svg style="left:1622px;top:234px;opacity:.6" width="14" height="12"><rect x="1" y="3" width="10" height="7" rx="1" fill="#ccc" stroke="#666" stroke-width="0.6"/><circle cx="9" cy="7.5" r="3.5" fill="#555"/></svg>
<div class="a" style="left:1643px;top:235px;width:13px;height:11px;background:transparent;border:1px solid #333;border-radius:3px"></div>
<div class="a" style="left:1664px;top:235px;width:13px;height:11px;background:transparent;border:1px solid #333;border-radius:3px"></div>
<div class="t" style="left:1695px;top:234.24px;color:#222;font-size:12px;">+</div>
<svg style="left:1705px;top:226px" width="15" height="14"><path d="M1 1 V13 M14 1 V13" stroke="#eee" stroke-width="1"/><path d="M7.5 1.5 L12.5 3.5 V10 L7.5 12.5 L2.5 10 V3.5Z" fill="#7d9fc4"/><path d="M2.5 3.5 L7.5 5.5 L12.5 3.5 L7.5 1.5Z" fill="#c8dcf0"/><path d="M2.5 3.5 L7.5 5.5 V12.5 L2.5 10Z" fill="#a5c2e0"/></svg>
<div class="t" style="left:1722px;top:225.72px;color:#111;font-size:11px;font-weight:bold;letter-spacing:0.5px;">Wifi_Energy_Meter_Turned_</div>
<div class="t" style="left:1886px;top:225.72px;color:#111;font-size:11px;font-weight:bold;">...</div>
<div class="t" style="left:1730px;top:239.72px;color:#eeeeee;font-size:11px;">22 Items</div>
<div class="a" style="left:1597px;top:1116px;width:323px;height:2px;background:#333;"></div>
<div class="a" style="left:1597px;top:1118px;width:323px;height:34px;background:#484848;"></div>
<div class="t" style="left:1600px;top:1129.24px;color:#d0d0d0;font-size:12px;">&gt;</div>
<div class="a" style="left:1614px;top:1127px;width:273px;height:18px;background:#9199a1;border:1px solid #3c3c3c;border-radius:6px"></div>
<div class="t" style="left:1623px;top:1129.72px;color:#555b62;font-size:11px;">Command</div>
<div class="a" style="left:1891px;top:1125px;width:23px;height:23px;background:#5a5a5a;border:1px solid #3a3a3a;border-radius:5px"></div>
<div class="a" style="left:1917px;top:78px;width:3px;height:1074px;background:#383838;"></div>
<svg style="left:1896px;top:1131px" width="12" height="12"><circle cx="6" cy="6" r="5" fill="none" stroke="#e07070" stroke-width="1.3"/></svg>
<div class="a" style="left:9px;top:1071px;width:1232px;height:40px;background:#606060;border-radius:8px"></div>
<div class="a" style="left:9px;top:1071px;width:1232px;height:25px;background:#939aa2;border-radius:8px 8px 0 0"></div>
<div class="a" style="left:9px;top:1071px;width:28px;height:25px;background:#8a9199;border-radius:8px 0 0 0"></div>
<div class="a" style="left:1212px;top:1071px;width:29px;height:25px;background:#8a9199;border-radius:0 8px 0 0"></div>
<div class="a" style="left:9px;top:1095px;width:1232px;height:1px;background:#3a3a3a;"></div>
<div class="a" style="left:9px;top:1096px;width:18px;height:15px;background:#5a5a5a;border-radius:0 0 0 8px"></div>
<div class="a" style="left:27px;top:1096px;width:1px;height:15px;background:#4a4a4a;"></div>
<div class="a" style="left:1221px;top:1096px;width:1px;height:15px;background:#4a4a4a;"></div>
<svg style="left:0;top:1072px" width="1240" height="10"><rect x="37.5" y="0" width="1.2" height="9" fill="#ffffff"/><rect x="43" y="1" width="1" height="4" fill="#3a3f44"/><rect x="48" y="1" width="1" height="4" fill="#3a3f44"/><rect x="53" y="1" width="1" height="4" fill="#3a3f44"/><rect x="58" y="1" width="1" height="4" fill="#3a3f44"/><rect x="64" y="1" width="1" height="4" fill="#3a3f44"/><rect x="69" y="1" width="1" height="4" fill="#3a3f44"/><rect x="74" y="1" width="1" height="4" fill="#3a3f44"/><rect x="79" y="1" width="1" height="4" fill="#3a3f44"/><rect x="84" y="1" width="1" height="4" fill="#3a3f44"/><rect x="90" y="1" width="1" height="4" fill="#3a3f44"/><rect x="95" y="1" width="1" height="4" fill="#3a3f44"/><rect x="99.5" y="0" width="1.2" height="9" fill="#2e3236"/><rect x="105" y="1" width="1" height="4" fill="#3a3f44"/><rect x="111" y="1" width="1" height="4" fill="#3a3f44"/><rect x="116" y="1" width="1" height="4" fill="#3a3f44"/><rect x="121" y="1" width="1" height="4" fill="#3a3f44"/><rect x="126" y="1" width="1" height="4" fill="#3a3f44"/><rect x="131" y="1" width="1" height="4" fill="#3a3f44"/><rect x="137" y="1" width="1" height="4" fill="#3a3f44"/><rect x="142" y="1" width="1" height="4" fill="#3a3f44"/><rect x="147" y="1" width="1" height="4" fill="#3a3f44"/><rect x="152" y="1" width="1" height="4" fill="#3a3f44"/><rect x="158" y="1" width="1" height="4" fill="#3a3f44"/><rect x="162.5" y="0" width="1.2" height="9" fill="#2e3236"/><rect x="168" y="1" width="1" height="4" fill="#3a3f44"/><rect x="173" y="1" width="1" height="4" fill="#3a3f44"/><rect x="178" y="1" width="1" height="4" fill="#3a3f44"/><rect x="184" y="1" width="1" height="4" fill="#3a3f44"/><rect x="189" y="1" width="1" height="4" fill="#3a3f44"/><rect x="194" y="1" width="1" height="4" fill="#3a3f44"/><rect x="199" y="1" width="1" height="4" fill="#3a3f44"/><rect x="205" y="1" width="1" height="4" fill="#3a3f44"/><rect x="210" y="1" width="1" height="4" fill="#3a3f44"/><rect x="215" y="1" width="1" height="4" fill="#3a3f44"/><rect x="220" y="1" width="1" height="4" fill="#3a3f44"/><rect x="224.5" y="0" width="1.2" height="9" fill="#2e3236"/><rect x="231" y="1" width="1" height="4" fill="#3a3f44"/><rect x="236" y="1" width="1" height="4" fill="#3a3f44"/><rect x="241" y="1" width="1" height="4" fill="#3a3f44"/><rect x="246" y="1" width="1" height="4" fill="#3a3f44"/><rect x="252" y="1" width="1" height="4" fill="#3a3f44"/><rect x="257" y="1" width="1" height="4" fill="#3a3f44"/><rect x="262" y="1" width="1" height="4" fill="#3a3f44"/><rect x="267" y="1" width="1" height="4" fill="#3a3f44"/><rect x="272" y="1" width="1" height="4" fill="#3a3f44"/><rect x="278" y="1" width="1" height="4" fill="#3a3f44"/><rect x="283" y="1" width="1" height="4" fill="#3a3f44"/><rect x="287.5" y="0" width="1.2" height="9" fill="#2e3236"/><rect x="293" y="1" width="1" height="4" fill="#3a3f44"/><rect x="298" y="1" width="1" height="4" fill="#3a3f44"/><rect x="304" y="1" width="1" height="4" fill="#3a3f44"/><rect x="309" y="1" width="1" height="4" fill="#3a3f44"/><rect x="314" y="1" width="1" height="4" fill="#3a3f44"/><rect x="319" y="1" width="1" height="4" fill="#3a3f44"/><rect x="325" y="1" width="1" height="4" fill="#3a3f44"/><rect x="330" y="1" width="1" height="4" fill="#3a3f44"/><rect x="335" y="1" width="1" height="4" fill="#3a3f44"/><rect x="340" y="1" width="1" height="4" fill="#3a3f44"/><rect x="345" y="1" width="1" height="4" fill="#3a3f44"/><rect x="350.5" y="0" width="1.2" height="9" fill="#2e3236"/><rect x="356" y="1" width="1" height="4" fill="#3a3f44"/><rect x="361" y="1" width="1" height="4" fill="#3a3f44"/><rect x="366" y="1" width="1" height="4" fill="#3a3f44"/><rect x="372" y="1" width="1" height="4" fill="#3a3f44"/><rect x="377" y="1" width="1" height="4" fill="#3a3f44"/><rect x="382" y="1" width="1" height="4" fill="#3a3f44"/><rect x="387" y="1" width="1" height="4" fill="#3a3f44"/><rect x="392" y="1" width="1" height="4" fill="#3a3f44"/><rect x="398" y="1" width="1" height="4" fill="#3a3f44"/><rect x="403" y="1" width="1" height="4" fill="#3a3f44"/><rect x="408" y="1" width="1" height="4" fill="#3a3f44"/><rect x="412.5" y="0" width="1.2" height="9" fill="#2e3236"/><rect x="419" y="1" width="1" height="4" fill="#3a3f44"/><rect x="424" y="1" width="1" height="4" fill="#3a3f44"/><rect x="429" y="1" width="1" height="4" fill="#3a3f44"/><rect x="434" y="1" width="1" height="4" fill="#3a3f44"/><rect x="439" y="1" width="1" height="4" fill="#3a3f44"/><rect x="445" y="1" width="1" height="4" fill="#3a3f44"/><rect x="450" y="1" width="1" height="4" fill="#3a3f44"/><rect x="455" y="1" width="1" height="4" fill="#3a3f44"/><rect x="460" y="1" width="1" height="4" fill="#3a3f44"/><rect x="466" y="1" width="1" height="4" fill="#3a3f44"/><rect x="471" y="1" width="1" height="4" fill="#3a3f44"/><rect x="475.5" y="0" width="1.2" height="9" fill="#2e3236"/><rect x="481" y="1" width="1" height="4" fill="#3a3f44"/><rect x="486" y="1" width="1" height="4" fill="#3a3f44"/><rect x="492" y="1" width="1" height="4" fill="#3a3f44"/><rect x="497" y="1" width="1" height="4" fill="#3a3f44"/><rect x="502" y="1" width="1" height="4" fill="#3a3f44"/><rect x="507" y="1" width="1" height="4" fill="#3a3f44"/><rect x="513" y="1" width="1" height="4" fill="#3a3f44"/><rect x="518" y="1" width="1" height="4" fill="#3a3f44"/><rect x="523" y="1" width="1" height="4" fill="#3a3f44"/><rect x="528" y="1" width="1" height="4" fill="#3a3f44"/><rect x="533" y="1" width="1" height="4" fill="#3a3f44"/><rect x="538.5" y="0" width="1.2" height="9" fill="#2e3236"/><rect x="544" y="1" width="1" height="4" fill="#3a3f44"/><rect x="549" y="1" width="1" height="4" fill="#3a3f44"/><rect x="554" y="1" width="1" height="4" fill="#3a3f44"/><rect x="559" y="1" width="1" height="4" fill="#3a3f44"/><rect x="565" y="1" width="1" height="4" fill="#3a3f44"/><rect x="570" y="1" width="1" height="4" fill="#3a3f44"/><rect x="575" y="1" width="1" height="4" fill="#3a3f44"/><rect x="580" y="1" width="1" height="4" fill="#3a3f44"/><rect x="586" y="1" width="1" height="4" fill="#3a3f44"/><rect x="591" y="1" width="1" height="4" fill="#3a3f44"/><rect x="596" y="1" width="1" height="4" fill="#3a3f44"/><rect x="600.5" y="0" width="1.2" height="9" fill="#2e3236"/><rect x="606" y="1" width="1" height="4" fill="#3a3f44"/><rect x="612" y="1" width="1" height="4" fill="#3a3f44"/><rect x="617" y="1" width="1" height="4" fill="#3a3f44"/><rect x="622" y="1" width="1" height="4" fill="#3a3f44"/><rect x="627" y="1" width="1" height="4" fill="#3a3f44"/><rect x="633" y="1" width="1" height="4" fill="#3a3f44"/><rect x="638" y="1" width="1" height="4" fill="#3a3f44"/><rect x="643" y="1" width="1" height="4" fill="#3a3f44"/><rect x="648" y="1" width="1" height="4" fill="#3a3f44"/><rect x="653" y="1" width="1" height="4" fill="#3a3f44"/><rect x="659" y="1" width="1" height="4" fill="#3a3f44"/><rect x="663.5" y="0" width="1.2" height="9" fill="#2e3236"/><rect x="669" y="1" width="1" height="4" fill="#3a3f44"/><rect x="674" y="1" width="1" height="4" fill="#3a3f44"/><rect x="680" y="1" width="1" height="4" fill="#3a3f44"/><rect x="685" y="1" width="1" height="4" fill="#3a3f44"/><rect x="690" y="1" width="1" height="4" fill="#3a3f44"/><rect x="695" y="1" width="1" height="4" fill="#3a3f44"/><rect x="700" y="1" width="1" height="4" fill="#3a3f44"/><rect x="706" y="1" width="1" height="4" fill="#3a3f44"/><rect x="711" y="1" width="1" height="4" fill="#3a3f44"/><rect x="716" y="1" width="1" height="4" fill="#3a3f44"/><rect x="721" y="1" width="1" height="4" fill="#3a3f44"/><rect x="726.5" y="0" width="1.2" height="9" fill="#2e3236"/><rect x="732" y="1" width="1" height="4" fill="#3a3f44"/><rect x="737" y="1" width="1" height="4" fill="#3a3f44"/><rect x="742" y="1" width="1" height="4" fill="#3a3f44"/><rect x="747" y="1" width="1" height="4" fill="#3a3f44"/><rect x="753" y="1" width="1" height="4" fill="#3a3f44"/><rect x="758" y="1" width="1" height="4" fill="#3a3f44"/><rect x="763" y="1" width="1" height="4" fill="#3a3f44"/><rect x="768" y="1" width="1" height="4" fill="#3a3f44"/><rect x="774" y="1" width="1" height="4" fill="#3a3f44"/><rect x="779" y="1" width="1" height="4" fill="#3a3f44"/><rect x="784" y="1" width="1" height="4" fill="#3a3f44"/><rect x="788.5" y="0" width="1.2" height="9" fill="#2e3236"/><rect x="794" y="1" width="1" height="4" fill="#3a3f44"/><rect x="800" y="1" width="1" height="4" fill="#3a3f44"/><rect x="805" y="1" width="1" height="4" fill="#3a3f44"/><rect x="810" y="1" width="1" height="4" fill="#3a3f44"/><rect x="815" y="1" width="1" height="4" fill="#3a3f44"/><rect x="820" y="1" width="1" height="4" fill="#3a3f44"/><rect x="826" y="1" width="1" height="4" fill="#3a3f44"/><rect x="831" y="1" width="1" height="4" fill="#3a3f44"/><rect x="836" y="1" width="1" height="4" fill="#3a3f44"/><rect x="841" y="1" width="1" height="4" fill="#3a3f44"/><rect x="847" y="1" width="1" height="4" fill="#3a3f44"/><rect x="851.5" y="0" width="1.2" height="9" fill="#2e3236"/><rect x="857" y="1" width="1" height="4" fill="#3a3f44"/><rect x="862" y="1" width="1" height="4" fill="#3a3f44"/><rect x="867" y="1" width="1" height="4" fill="#3a3f44"/><rect x="873" y="1" width="1" height="4" fill="#3a3f44"/><rect x="878" y="1" width="1" height="4" fill="#3a3f44"/><rect x="883" y="1" width="1" height="4" fill="#3a3f44"/><rect x="888" y="1" width="1" height="4" fill="#3a3f44"/><rect x="894" y="1" width="1" height="4" fill="#3a3f44"/><rect x="899" y="1" width="1" height="4" fill="#3a3f44"/><rect x="904" y="1" width="1" height="4" fill="#3a3f44"/><rect x="909" y="1" width="1" height="4" fill="#3a3f44"/><rect x="913.5" y="0" width="1.2" height="9" fill="#2e3236"/><rect x="920" y="1" width="1" height="4" fill="#3a3f44"/><rect x="925" y="1" width="1" height="4" fill="#3a3f44"/><rect x="930" y="1" width="1" height="4" fill="#3a3f44"/><rect x="935" y="1" width="1" height="4" fill="#3a3f44"/><rect x="941" y="1" width="1" height="4" fill="#3a3f44"/><rect x="946" y="1" width="1" height="4" fill="#3a3f44"/><rect x="951" y="1" width="1" height="4" fill="#3a3f44"/><rect x="956" y="1" width="1" height="4" fill="#3a3f44"/><rect x="961" y="1" width="1" height="4" fill="#3a3f44"/><rect x="967" y="1" width="1" height="4" fill="#3a3f44"/><rect x="972" y="1" width="1" height="4" fill="#3a3f44"/><rect x="976.5" y="0" width="1.2" height="9" fill="#2e3236"/><rect x="982" y="1" width="1" height="4" fill="#3a3f44"/><rect x="988" y="1" width="1" height="4" fill="#3a3f44"/><rect x="993" y="1" width="1" height="4" fill="#3a3f44"/><rect x="998" y="1" width="1" height="4" fill="#3a3f44"/><rect x="1003" y="1" width="1" height="4" fill="#3a3f44"/><rect x="1008" y="1" width="1" height="4" fill="#3a3f44"/><rect x="1014" y="1" width="1" height="4" fill="#3a3f44"/><rect x="1019" y="1" width="1" height="4" fill="#3a3f44"/><rect x="1024" y="1" width="1" height="4" fill="#3a3f44"/><rect x="1029" y="1" width="1" height="4" fill="#3a3f44"/><rect x="1035" y="1" width="1" height="4" fill="#3a3f44"/><rect x="1039.5" y="0" width="1.2" height="9" fill="#2e3236"/><rect x="1045" y="1" width="1" height="4" fill="#3a3f44"/><rect x="1050" y="1" width="1" height="4" fill="#3a3f44"/><rect x="1055" y="1" width="1" height="4" fill="#3a3f44"/><rect x="1061" y="1" width="1" height="4" fill="#3a3f44"/><rect x="1066" y="1" width="1" height="4" fill="#3a3f44"/><rect x="1071" y="1" width="1" height="4" fill="#3a3f44"/><rect x="1076" y="1" width="1" height="4" fill="#3a3f44"/><rect x="1081" y="1" width="1" height="4" fill="#3a3f44"/><rect x="1087" y="1" width="1" height="4" fill="#3a3f44"/><rect x="1092" y="1" width="1" height="4" fill="#3a3f44"/><rect x="1097" y="1" width="1" height="4" fill="#3a3f44"/><rect x="1101.5" y="0" width="1.2" height="9" fill="#2e3236"/><rect x="1108" y="1" width="1" height="4" fill="#3a3f44"/><rect x="1113" y="1" width="1" height="4" fill="#3a3f44"/><rect x="1118" y="1" width="1" height="4" fill="#3a3f44"/><rect x="1123" y="1" width="1" height="4" fill="#3a3f44"/><rect x="1128" y="1" width="1" height="4" fill="#3a3f44"/><rect x="1134" y="1" width="1" height="4" fill="#3a3f44"/><rect x="1139" y="1" width="1" height="4" fill="#3a3f44"/><rect x="1144" y="1" width="1" height="4" fill="#3a3f44"/><rect x="1149" y="1" width="1" height="4" fill="#3a3f44"/><rect x="1155" y="1" width="1" height="4" fill="#3a3f44"/><rect x="1160" y="1" width="1" height="4" fill="#3a3f44"/><rect x="1164.5" y="0" width="1.2" height="9" fill="#2e3236"/><rect x="1170" y="1" width="1" height="4" fill="#3a3f44"/><rect x="1175" y="1" width="1" height="4" fill="#3a3f44"/><rect x="1181" y="1" width="1" height="4" fill="#3a3f44"/><rect x="1186" y="1" width="1" height="4" fill="#3a3f44"/><rect x="1191" y="1" width="1" height="4" fill="#3a3f44"/><rect x="1196" y="1" width="1" height="4" fill="#3a3f44"/><rect x="1202" y="1" width="1" height="4" fill="#3a3f44"/><rect x="1207" y="1" width="1" height="4" fill="#3a3f44"/><rect x="1212" y="1" width="1" height="4" fill="#3a3f44"/></svg>
<div class="t" style="left:17.5px;width:40.0px;text-align:center;top:1080.22px;color:#ffffff;font-size:11px;">0</div>
<div class="t" style="left:80.13888888888889px;width:40.0px;text-align:center;top:1080.22px;color:#22262a;font-size:11px;">12</div>
<div class="t" style="left:142.77777777777777px;width:40.0px;text-align:center;top:1080.22px;color:#22262a;font-size:11px;">24</div>
<div class="t" style="left:205.41666666666666px;width:40.0px;text-align:center;top:1080.22px;color:#22262a;font-size:11px;">36</div>
<div class="t" style="left:268.05555555555554px;width:40.0px;text-align:center;top:1080.22px;color:#22262a;font-size:11px;">48</div>
<div class="t" style="left:330.69444444444446px;width:40.0px;text-align:center;top:1080.22px;color:#22262a;font-size:11px;">60</div>
<div class="t" style="left:393.3333333333333px;width:40.0px;text-align:center;top:1080.22px;color:#22262a;font-size:11px;">72</div>
<div class="t" style="left:455.97222222222223px;width:40.0px;text-align:center;top:1080.22px;color:#22262a;font-size:11px;">84</div>
<div class="t" style="left:518.6111111111111px;width:40.0px;text-align:center;top:1080.22px;color:#22262a;font-size:11px;">96</div>
<div class="t" style="left:581.25px;width:40.0px;text-align:center;top:1080.22px;color:#22262a;font-size:11px;">108</div>
<div class="t" style="left:643.8888888888889px;width:40.0px;text-align:center;top:1080.22px;color:#22262a;font-size:11px;">120</div>
<div class="t" style="left:706.5277777777778px;width:40.0px;text-align:center;top:1080.22px;color:#22262a;font-size:11px;">132</div>
<div class="t" style="left:769.1666666666666px;width:40.0px;text-align:center;top:1080.22px;color:#22262a;font-size:11px;">144</div>
<div class="t" style="left:831.8055555555555px;width:40.0px;text-align:center;top:1080.22px;color:#22262a;font-size:11px;">156</div>
<div class="t" style="left:894.4444444444445px;width:40.0px;text-align:center;top:1080.22px;color:#22262a;font-size:11px;">168</div>
<div class="t" style="left:957.0833333333334px;width:40.0px;text-align:center;top:1080.22px;color:#22262a;font-size:11px;">180</div>
<div class="t" style="left:1019.7222222222222px;width:40.0px;text-align:center;top:1080.22px;color:#22262a;font-size:11px;">192</div>
<div class="t" style="left:1082.361111111111px;width:40.0px;text-align:center;top:1080.22px;color:#22262a;font-size:11px;">204</div>
<div class="t" style="left:1145.0px;width:40.0px;text-align:center;top:1080.22px;color:#22262a;font-size:11px;">216</div>
<div class="t" style="left:31px;top:1095.22px;color:#1e1e1e;font-size:11px;">0</div>
<div class="t" style="left:604px;width:40px;text-align:center;top:1095.22px;color:#1e1e1e;font-size:11px;">225</div>
<div class="t" style="right:702px;top:1095.22px;color:#1e1e1e;font-size:11px;">225</div>
<div class="a" style="left:97px;top:1121px;width:78px;height:22px;background:#5b5b5b;border:1px solid #373737;border-radius:6px"></div>
<svg style="left:100px;top:1124px" width="18" height="17" viewBox="0 0 18 17"><path d="M6 3 L17 1 V12" stroke="#7a94d8" stroke-width="2.2" fill="none"/><path d="M6 3 V14" stroke="#7a94d8" stroke-width="2.2"/><path d="M6 4 L17 2 V5 L6 7Z" fill="#7a94d8"/><ellipse cx="3.5" cy="14" rx="3.3" ry="2.6" fill="#7a94d8"/><ellipse cx="14.5" cy="12.5" rx="3.3" ry="2.6" fill="#7a94d8"/></svg>
<div class="t" style="left:120px;top:1126.22px;color:#dcdcdc;font-size:11px;">Audio</div>
<div class="a" style="left:179px;top:1121px;width:90px;height:22px;background:#5b5b5b;border:1px solid #373737;border-radius:6px"></div>
<svg style="left:181px;top:1124px" width="19" height="16"><rect x="0.5" y="0.5" width="18" height="15" fill="#444" stroke="#ccc"/><path d="M2 3 Q9 14 17 13" stroke="#e04040" stroke-width="1.5" fill="none"/><path d="M2 13 Q9 2 17 4" stroke="#40d040" stroke-width="1.5" fill="none"/><path d="M2 8 H17" stroke="#e0e040" stroke-width="1"/></svg>
<div class="t" style="left:202px;top:1126.22px;color:#dcdcdc;font-size:11px;">Graph Editor</div>
<div class="a" style="left:273px;top:1121px;width:122px;height:22px;background:#5b5b5b;border:1px solid #373737;border-radius:6px"></div>
<div class="t" style="left:307px;top:1126.22px;color:#dcdcdc;font-size:11px;">Animated</div>
<svg style="left:380px;top:1130px" width="9" height="5"><path d="M0 0 H9 L4.5 5Z" fill="#ddd"/></svg>
<div class="a" style="left:398px;top:1121px;width:46px;height:22px;background:#5b5b5b;border:1px solid #373737;border-radius:6px"></div>
<div class="a" style="left:421px;top:1122px;width:1px;height:20px;background:#474747;"></div>
<svg style="left:402px;top:1125px" width="16" height="14"><rect x="1" y="1" width="2" height="12" fill="#ddd"/><path d="M15 1 L5 7 L15 13Z" fill="none" stroke="#ddd" stroke-width="1.4"/></svg>
<svg style="left:424px;top:1125px" width="16" height="14"><path d="M11 1 L1 7 L11 13Z" fill="none" stroke="#ddd" stroke-width="1.4"/><rect x="12" y="1" width="1.5" height="12" fill="#ddd"/><rect x="14.5" y="1" width="1.5" height="12" fill="#ddd"/></svg>
<div class="a" style="left:448px;top:1121px;width:73px;height:22px;background:#9aa2aa;border:1px solid #3a3a3a;border-radius:6px"></div>
<div class="a" style="left:506px;top:1122px;width:14px;height:20px;background:#8a929a;border-radius:0 5px 5px 0"></div>
<svg style="left:508px;top:1127px" width="10" height="10"><path d="M4 1 L0 5 L4 9Z M6 1 L10 5 L6 9Z" fill="#ccd"/></svg>
<div class="t" style="left:458px;top:1126.22px;color:#111;font-size:11px;">0</div>
<div class="a" style="left:524px;top:1121px;width:46px;height:22px;background:#5b5b5b;border:1px solid #373737;border-radius:6px"></div>
<div class="a" style="left:547px;top:1122px;width:1px;height:20px;background:#474747;"></div>
<svg style="left:528px;top:1125px" width="16" height="14"><rect x="0" y="1" width="1.5" height="12" fill="#ddd"/><rect x="2.5" y="1" width="1.5" height="12" fill="#ddd"/><path d="M5 1 L15 7 L5 13Z" fill="none" stroke="#ddd" stroke-width="1.4"/></svg>
<svg style="left:551px;top:1125px" width="16" height="14"><path d="M1 1 L11 7 L1 13Z" fill="none" stroke="#ddd" stroke-width="1.4"/><rect x="13" y="1" width="2" height="12" fill="#ddd"/></svg>
<div class="a" style="left:573px;top:1121px;width:79px;height:22px;background:#5b5b5b;border:1px solid #373737;border-radius:6px"></div>
<svg style="left:579px;top:1125px" width="12" height="14"><path d="M1 1 L11 7 L1 13Z" fill="none" stroke="#ddd" stroke-width="1.4"/></svg>
<div class="t" style="left:596px;top:1126.22px;color:#dcdcdc;font-size:11px;">Play</div>
<div class="a" style="left:656px;top:1121px;width:123px;height:22px;background:#5b5b5b;border:1px solid #373737;border-radius:6px"></div>
<svg style="left:659px;top:1123px" width="18" height="18"><path d="M1 5 L9 1 L17 5 V13 L9 17 L1 13Z" fill="#5a9a40"/><path d="M1 5 L9 9 L17 5 L9 1Z" fill="#8ad060"/><rect x="9" y="8" width="7" height="9" fill="#ddd" stroke="#444" stroke-width="0.6"/><path d="M12.5 9 V14 M10.5 12 L12.5 14 L14.5 12" stroke="#2a7a2a" stroke-width="1.2" fill="none"/></svg>
<div class="t" style="left:678px;top:1126.22px;color:#dcdcdc;font-size:11px;">Cache Deformers</div>
<div class="a" style="left:783px;top:1121px;width:46px;height:22px;background:#5b5b5b;border:1px solid #373737;border-radius:6px"></div>
<div class="a" style="left:806px;top:1122px;width:1px;height:20px;background:#474747;"></div>
<div class="a" style="left:832px;top:1121px;width:46px;height:22px;background:#5b5b5b;border:1px solid #373737;border-radius:6px"></div>
<div class="a" style="left:855px;top:1122px;width:1px;height:20px;background:#474747;"></div>
<div class="a" style="left:882px;top:1121px;width:68px;height:22px;background:#5b5b5b;border:1px solid #373737;border-radius:6px"></div>
<div class="a" style="left:904px;top:1122px;width:1px;height:20px;background:#474747;"></div>
<div class="a" style="left:927px;top:1122px;width:1px;height:20px;background:#474747;"></div>
<div class="a" style="left:953px;top:1121px;width:46px;height:22px;background:#5b5b5b;border:1px solid #373737;border-radius:6px"></div>
<div class="a" style="left:976px;top:1122px;width:1px;height:20px;background:#474747;"></div>
<div class="a" style="left:1003px;top:1121px;width:68px;height:22px;background:#5b5b5b;border:1px solid #373737;border-radius:6px"></div>
<div class="a" style="left:1025px;top:1122px;width:1px;height:20px;background:#474747;"></div>
<div class="a" style="left:1048px;top:1122px;width:1px;height:20px;background:#474747;"></div>
<svg style="left:786px;top:1124px" width="16" height="16"><circle cx="8" cy="8" r="6.5" fill="none" stroke="#bbb" stroke-width="1.3"/><path d="M8 8 V2 M8 8 L3 12 M8 8 L13 12" stroke="#bbb" stroke-width="1.3"/></svg>
<svg style="left:809px;top:1124px" width="16" height="16"><circle cx="8" cy="8" r="6.5" fill="none" stroke="#bbb" stroke-width="1.3"/><path d="M8 8 V2 M8 8 L3 12 M8 8 L13 12" stroke="#bbb" stroke-width="1.3"/></svg>
<svg style="left:836px;top:1125px" width="16" height="14"><rect x="0.5" y="0.5" width="15" height="13" fill="none" stroke="#bbb"/><path d="M14 2 L5 7 L14 12Z" fill="none" stroke="#ddd" stroke-width="1.3"/><rect x="2" y="2" width="2" height="10" fill="#ddd"/></svg>
<svg style="left:859px;top:1125px" width="16" height="14"><rect x="0.5" y="0.5" width="15" height="13" fill="none" stroke="#bbb"/><path d="M13 2 L3 7 L13 12Z" fill="none" stroke="#ddd" stroke-width="1.3"/></svg>
<svg style="left:885px;top:1123px" width="18" height="18"><path d="M1 9 L4 4 L8 12 L12 3" stroke="#ddd" stroke-width="1.5" fill="none"/><circle cx="13" cy="13" r="4" fill="#d89090"/></svg>
<svg style="left:908px;top:1124px" width="16" height="16"><circle cx="8" cy="8" r="6" fill="#d8a8a8"/></svg>
<svg style="left:930px;top:1123px" width="18" height="18"><path d="M2 2 V12 M2 12 H12 M5 3 L11 10" stroke="#999" stroke-width="1.3" fill="none"/><circle cx="13" cy="13" r="4" fill="#d89090"/></svg>
<svg style="left:957px;top:1125px" width="16" height="14"><rect x="0.5" y="0.5" width="15" height="13" fill="none" stroke="#bbb"/><path d="M3 2 L12 7 L3 12Z" fill="none" stroke="#ddd" stroke-width="1.3"/></svg>
<svg style="left:980px;top:1125px" width="16" height="14"><rect x="0.5" y="0.5" width="15" height="13" fill="none" stroke="#bbb"/><path d="M2 2 L11 7 L2 12Z" fill="none" stroke="#ddd" stroke-width="1.3"/><rect x="12" y="2" width="2" height="10" fill="#ddd"/></svg>
<svg style="left:1006px;top:1123px" width="18" height="18"><path d="M2 10 L8 5 L10 8" stroke="#bbb" stroke-width="1.5" fill="none"/><circle cx="12" cy="13" r="4" fill="#d89090"/></svg>
<svg style="left:1029px;top:1123px" width="18" height="18"><path d="M2 10 L8 5 L10 8" stroke="#bbb" stroke-width="1.5" fill="none"/><circle cx="12" cy="13" r="4" fill="#d89090"/></svg>
<svg style="left:1052px;top:1123px" width="18" height="18"><path d="M2 10 L8 5 L10 8" stroke="#bbb" stroke-width="1.5" fill="none"/><circle cx="12" cy="13" r="4" fill="#d89090"/></svg>
<div class="a" style="left:1075px;top:1121px;width:78px;height:22px;background:#5b5b5b;border:1px solid #373737;border-radius:6px"></div>
<svg style="left:1080px;top:1125px" width="14" height="14" viewBox="0 0 14 14"><circle cx="7.0" cy="7.0" r="5.6000000000000005" fill="none" stroke="#bdbdbd" stroke-width="2.8000000000000003" stroke-dasharray="2.20"/><circle cx="7.0" cy="7.0" r="4.34" fill="#bdbdbd"/><circle cx="7.0" cy="7.0" r="1.54" fill="#555"/></svg>
<div class="t" style="left:1097px;top:1126.22px;color:#dcdcdc;font-size:11px;">Settings</div>
<svg style="left:0;top:0" width="1920" height="1152"><defs><clipPath id="vpc"><rect x="8" y="247" width="1234" height="812"/></clipPath><linearGradient id="vpbg" x1="0" y1="0" x2="0" y2="1"><stop offset="0" stop-color="#5c646b"/><stop offset="1" stop-color="#5f676e"/></linearGradient></defs><g clip-path="url(#vpc)"><rect x="8" y="247" width="1234" height="812" fill="url(#vpbg)"/><path d="M1210.5 791.8L1014.8 724.0M1454.4 891.7L1204.1 803.2M1005.6 733.0L844.4 676.0M821.6 691.4L686.1 641.4M646.2 661.8L531.3 616.4M436.9 654.9L339.6 610.1M162.8 669.8L85.4 621.6M140.0 677.5L63.4 627.9M116.3 685.5L40.7 634.4M778.5 637.0L684.5 690.2M761.4 631.1L666.6 683.0M744.7 625.4L649.1 675.9M283.6 619.3L128.9 670.3M272.2 613.6L118.1 663.3M77.6 637.1L-113.5 693.6M-129.5 678.3L-372.6 747.3" stroke="#4f565d" stroke-width="1" fill="none" opacity="0.07"/><path d="M1204.1 803.2L1005.6 733.0M1452.5 907.2L1197.4 815.1M996.1 742.4L833.2 683.6M809.7 699.5L673.2 648.0M617.5 676.5L501.6 628.5M419.4 662.0L322.2 615.9M401.4 669.4L304.3 622.0M91.8 693.8L17.3 641.1M66.5 702.3L-6.8 648.0M1421.2 857.4L1398.7 979.0M850.9 661.8L761.2 721.2M832.2 655.4L741.3 713.2M813.9 649.1L721.8 705.3M796.0 643.0L702.9 697.7M509.7 619.5L385.1 669.7M495.9 614.0L371.3 662.8M295.2 625.1L140.0 677.5M97.3 649.9L-96.5 709.7M-121.6 685.9L-367.3 757.0" stroke="#4f565d" stroke-width="1" fill="none" opacity="0.13"/><path d="M1197.4 815.1L996.1 742.4M1450.4 923.3L1190.4 827.4M986.2 752.1L821.6 691.4M797.4 707.8L659.9 654.8M602.4 684.2L486.2 634.8M382.8 677.0L285.9 628.2M40.2 711.2L-31.7 655.2M-15.2 729.9L-84.0 670.2M1386.4 845.5L1358.0 962.5M1352.8 834.0L1318.8 946.7M1320.1 822.8L1281.1 931.4M1288.5 811.9L1244.8 916.7M1257.9 801.4L1209.7 902.6M952.0 696.5L869.8 765.1M930.8 689.2L846.8 755.8M889.9 675.2L802.8 738.1M870.2 668.4L781.7 729.5M538.1 631.0L413.9 683.9M523.7 625.2L399.3 676.7M307.1 631.0L151.3 684.9M107.6 656.5L-87.6 718.1M-113.5 693.6L-361.8 767.0" stroke="#4f565d" stroke-width="1" fill="none" opacity="0.20"/><path d="M1190.4 827.4L986.2 752.1M1448.2 940.2L1183.1 840.3M976.0 762.2L809.7 699.5M784.6 716.4L646.2 661.8M586.8 692.1L470.2 641.3M363.6 684.8L267.0 634.6M-44.4 739.8L-111.5 678.0M-74.8 750.0L-139.9 686.2M-106.3 760.7L-169.3 694.6M-139.2 771.7L-199.8 703.3M1228.2 791.2L1175.9 888.9M1199.3 781.3L1143.3 875.7M1171.3 771.7L1111.7 862.9M1117.8 753.3L1051.8 838.7M1092.1 744.5L1023.3 827.2M1067.1 736.0L995.6 816.0M1042.9 727.6L968.9 805.2M1019.2 719.5L943.0 794.7M996.2 711.7L917.8 784.6M973.9 704.0L893.5 774.7M567.9 643.1L444.1 698.9M552.9 637.0L428.8 691.3M331.9 643.3L175.0 700.2M319.4 637.0L163.0 692.4M118.1 663.3L-78.5 726.8" stroke="#4f565d" stroke-width="1" fill="none" opacity="0.26"/><path d="M1183.1 840.3L976.0 762.2M1446.0 958.0L1175.6 853.7M1175.6 853.7L965.4 772.6M965.4 772.6L797.4 707.8M570.7 700.4L453.8 648.0M554.1 708.9L436.9 654.9M323.1 701.3L227.3 648.0M301.8 710.0L206.5 655.0M-173.3 783.3L-231.3 712.4M-208.9 795.3L-264.1 721.8M-245.9 807.8L-298.0 731.5M-284.6 820.9L-333.3 741.6M599.2 655.7L476.1 714.8M583.4 649.3L459.9 706.7M344.7 649.6L187.3 708.2M128.9 670.3L-69.1 735.7M-87.6 718.1L-344.3 799.1M-96.5 709.7L-350.3 788.0" stroke="#4f565d" stroke-width="1" fill="none" opacity="0.33"/><path d="M1443.6 976.6L1167.7 867.6M1167.7 867.6L954.4 783.5M954.4 783.5L784.6 716.4M757.7 734.6L617.5 676.5M743.6 744.2L602.4 684.2M536.8 717.7L419.4 662.0M279.8 719.0L185.0 662.3M257.0 728.3L162.8 669.8M615.4 662.3L492.7 723.0M371.3 662.8L213.0 724.8M151.3 684.9L-49.5 754.3M140.0 677.5L-59.5 744.8M-78.5 726.8L-338.1 810.5" stroke="#4f565d" stroke-width="1" fill="none" opacity="0.39"/><path d="M1438.5 1016.7L1150.8 897.5M728.9 754.1L586.8 692.1M519.0 726.8L401.4 669.4M233.3 738.0L140.0 677.5M208.7 748.0L116.3 685.5M666.6 683.0L545.5 749.2M649.1 675.9L527.4 740.2M385.1 669.7L226.4 733.5M163.0 692.4L-39.2 764.0M-69.1 735.7L-331.7 822.3" stroke="#4f565d" stroke-width="1" fill="none" opacity="0.45"/><path d="M1150.8 897.5L931.1 806.4M931.1 806.4L757.7 734.6M1435.7 1038.3L1141.8 913.4M918.7 818.6L743.6 744.2M713.6 764.4L570.7 700.4M500.5 736.3L382.8 677.0M481.3 746.1L363.6 684.8M183.2 758.4L91.8 693.8M156.7 769.2L66.5 702.3M721.8 705.3L603.2 777.8M702.9 697.7L583.4 768.0M684.5 690.2L564.2 758.5M413.9 683.9L254.5 751.7M399.3 676.7L240.3 742.5M175.0 700.2L-28.6 774.1M-59.5 744.8L-325.0 834.5" stroke="#4f565d" stroke-width="1" fill="none" opacity="0.52"/><path d="M1141.8 913.4L918.7 818.6M1432.8 1061.1L1132.4 930.1M905.9 831.3L728.9 754.1M697.8 775.1L554.1 708.9M129.2 780.4L40.2 711.2M1398.7 979.0L1365.9 1156.0M1358.0 962.5L1316.9 1131.7M781.7 729.5L666.5 809.2M761.2 721.2L644.7 798.4M741.3 713.2L623.7 787.9M428.8 691.3L269.1 761.2M187.3 708.2L-17.7 784.5M-49.5 754.3L-318.1 847.1" stroke="#4f565d" stroke-width="1" fill="none" opacity="0.59"/><path d="M1132.4 930.1L905.9 831.3M1429.7 1085.3L1122.5 947.6M1122.5 947.6L892.4 844.5M892.4 844.5L713.6 764.4M1426.4 1110.8L1112.2 966.0M1112.2 966.0L878.4 858.3M878.4 858.3L697.8 775.1M1423.0 1137.8L1101.3 985.3M1101.3 985.3L863.8 872.7M863.8 872.7L681.4 786.2M681.4 786.2L536.8 717.7M1419.3 1166.5L1089.8 1005.6M1089.8 1005.6L848.6 887.8M848.6 887.8L664.3 797.8M664.3 797.8L519.0 726.8M1415.4 1197.0L1077.7 1027.0M1077.7 1027.0L832.6 903.5M832.6 903.5L646.5 809.8M646.5 809.8L500.5 736.3M1411.3 1229.6L1065.0 1049.5M1065.0 1049.5L815.9 920.0M815.9 920.0L628.0 822.3M628.0 822.3L481.3 746.1M1402.1 1301.5L1037.3 1098.6M1037.3 1098.6L780.0 955.4M780.0 955.4L588.6 849.0M588.6 849.0L440.8 766.8M440.8 766.8L323.1 701.3M1397.0 1341.3L1022.3 1125.3M1022.3 1125.3L760.6 974.5M760.6 974.5L567.6 863.2M567.6 863.2L419.3 777.7M419.3 777.7L301.8 710.0M1391.5 1384.2L1006.3 1153.7M1006.3 1153.7L740.3 994.5M740.3 994.5L545.6 878.1M545.6 878.1L397.0 789.1M397.0 789.1L279.8 719.0M1385.6 1430.4L989.2 1183.8M989.2 1183.8L718.9 1015.6M718.9 1015.6L522.7 893.6M522.7 893.6L373.8 801.0M373.8 801.0L257.0 728.3M1379.2 1480.4L971.1 1216.0M971.1 1216.0L696.3 1037.9M696.3 1037.9L498.6 909.9M498.6 909.9L349.6 813.3M349.6 813.3L233.3 738.0M1372.3 1534.6L951.7 1250.3M951.7 1250.3L672.4 1061.4M672.4 1061.4L473.4 926.9M473.4 926.9L324.4 826.2M324.4 826.2L208.7 748.0M1364.8 1593.7L931.0 1287.0M931.0 1287.0L647.1 1086.3M647.1 1086.3L446.9 944.8M446.9 944.8L298.1 839.6M298.1 839.6L183.2 758.4M1356.5 1658.2L908.7 1326.4M908.7 1326.4L620.4 1112.7M620.4 1112.7L419.1 963.6M419.1 963.6L270.7 853.7M270.7 853.7L156.7 769.2M1347.5 1729.0L884.8 1368.8M884.8 1368.8L591.9 1140.7M591.9 1140.7L389.9 983.4M389.9 983.4L242.0 868.3M242.0 868.3L129.2 780.4M1326.5 1893.6L831.1 1463.9M831.1 1463.9L529.5 1202.3M529.5 1202.3L326.5 1026.2M326.5 1026.2L180.6 899.7M180.6 899.7L70.7 804.3M70.7 804.3L-15.2 729.9M1314.1 1989.9L800.8 1517.6M800.8 1517.6L495.1 1236.2M495.1 1236.2L292.2 1049.5M292.2 1049.5L147.7 916.5M147.7 916.5L39.5 817.0M39.5 817.0L-44.4 739.8M1300.3 2097.9L767.9 1576.0M767.9 1576.0L458.3 1272.5M458.3 1272.5L255.8 1074.1M255.8 1074.1L113.1 934.2M113.1 934.2L7.1 830.3M7.1 830.3L-74.8 750.0M1284.8 2219.8L731.8 1639.8M731.8 1639.8L418.8 1311.5M418.8 1311.5L217.3 1100.1M217.3 1100.1L76.8 952.7M76.8 952.7L-26.8 844.1M-26.8 844.1L-106.3 760.7M1267.1 2358.5L692.3 1709.9M692.3 1709.9L376.3 1353.3M376.3 1353.3L176.4 1127.8M176.4 1127.8L38.5 972.3M38.5 972.3L-62.2 858.5M-62.2 858.5L-139.2 771.7M1246.7 2517.7L648.7 1787.2M648.7 1787.2L330.4 1398.5M330.4 1398.5L132.9 1157.2M132.9 1157.2L-1.7 992.8M-1.7 992.8L-99.3 873.7M-99.3 873.7L-173.3 783.3M1223.1 2702.3L600.3 1872.9M600.3 1872.9L280.8 1447.4M280.8 1447.4L86.5 1188.6M86.5 1188.6L-44.2 1014.6M-44.2 1014.6L-138.1 889.5M-138.1 889.5L-208.9 795.3M1195.5 2918.9L546.4 1968.3M546.4 1968.3L227.0 1500.5M227.0 1500.5L36.9 1222.1M36.9 1222.1L-89.1 1037.5M-89.1 1037.5L-178.8 906.1M-178.8 906.1L-245.9 807.8M1162.6 3176.5L486.0 2075.3M486.0 2075.3L168.4 1558.3M168.4 1558.3L-16.1 1258.0M-16.1 1258.0L-136.6 1061.8M-136.6 1061.8L-221.5 923.5M-221.5 923.5L-284.6 820.9M1365.9 1156.0L1313.7 1437.9M1313.7 1437.9L1217.6 1957.0M1217.6 1957.0L981.8 3230.0M1316.9 1131.7L1252.2 1398.1M1252.2 1398.1L1135.4 1879.0M1135.4 1879.0L861.0 3008.5M1318.8 946.7L1270.1 1108.5M1270.1 1108.5L1194.3 1360.6M1194.3 1360.6L1059.9 1807.4M1059.9 1807.4L756.3 2816.6M1281.1 931.4L1225.5 1086.4M1225.5 1086.4L1139.7 1325.2M1139.7 1325.2L990.3 1741.3M990.3 1741.3L664.6 2648.6M1244.8 916.7L1182.8 1065.2M1182.8 1065.2L1088.2 1291.8M1088.2 1291.8L926.1 1680.3M926.1 1680.3L583.8 2500.3M1209.7 902.6L1141.9 1045.0M1141.9 1045.0L1039.5 1260.2M1039.5 1260.2L866.4 1623.7M866.4 1623.7L511.9 2368.5M1175.9 888.9L1102.8 1025.5M1102.8 1025.5L993.3 1230.3M993.3 1230.3L811.0 1571.1M811.0 1571.1L447.5 2250.6M1143.3 875.7L1065.3 1006.9M1065.3 1006.9L949.5 1202.0M949.5 1202.0L759.3 1522.0M759.3 1522.0L389.6 2144.4M1111.7 862.9L1029.3 989.1M1029.3 989.1L907.9 1175.0M907.9 1175.0L711.1 1476.2M711.1 1476.2L337.2 2048.4M1051.8 838.7L961.5 955.5M961.5 955.5L830.6 1124.9M830.6 1124.9L623.4 1393.0M623.4 1393.0L246.1 1881.3M1023.3 827.2L929.6 939.7M929.6 939.7L794.7 1101.7M794.7 1101.7L583.5 1355.2M583.5 1355.2L206.2 1808.2M995.6 816.0L898.8 924.4M898.8 924.4L760.4 1079.4M760.4 1079.4L546.0 1319.5M546.0 1319.5L169.5 1741.0M968.9 805.2L869.2 909.7M869.2 909.7L727.6 1058.2M727.6 1058.2L510.5 1285.9M510.5 1285.9L135.7 1678.9M943.0 794.7L840.7 895.6M840.7 895.6L696.3 1037.9M696.3 1037.9L477.0 1254.1M477.0 1254.1L104.3 1621.4M917.8 784.6L813.1 881.9M813.1 881.9L666.3 1018.5M666.3 1018.5L445.3 1223.9M445.3 1223.9L75.2 1568.0M893.5 774.7L786.6 868.7M786.6 868.7L637.5 999.8M637.5 999.8L415.2 1195.4M415.2 1195.4L48.1 1518.3M869.8 765.1L760.9 856.0M760.9 856.0L609.9 982.0M609.9 982.0L386.7 1168.3M386.7 1168.3L22.8 1471.9M846.8 755.8L736.1 843.7M736.1 843.7L583.5 964.8M583.5 964.8L359.5 1142.5M359.5 1142.5L-0.9 1428.5M802.8 738.1L688.9 820.3M688.9 820.3L533.6 932.5M533.6 932.5L309.1 1094.7M309.1 1094.7L-44.0 1349.6M666.5 809.2L510.0 917.3M510.0 917.3L285.6 1072.4M285.6 1072.4L-63.6 1313.7M644.7 798.4L487.4 902.6M487.4 902.6L263.2 1051.1M263.2 1051.1L-82.1 1279.7M623.7 787.9L465.6 888.4M465.6 888.4L241.7 1030.7M241.7 1030.7L-99.6 1247.7M603.2 777.8L444.5 874.8M444.5 874.8L221.2 1011.3M221.2 1011.3L-116.1 1217.4M583.4 768.0L424.2 861.6M424.2 861.6L201.6 992.6M201.6 992.6L-131.8 1188.7M564.2 758.5L404.6 848.9M404.6 848.9L182.7 974.7M182.7 974.7L-146.6 1161.4M545.5 749.2L385.6 836.7M385.6 836.7L164.6 957.6M164.6 957.6L-160.7 1135.6M527.4 740.2L367.3 824.8M367.3 824.8L147.3 941.1M147.3 941.1L-174.2 1110.9M492.7 723.0L332.5 802.2M332.5 802.2L114.5 910.0M114.5 910.0L-199.2 1065.1M476.1 714.8L315.9 791.5M315.9 791.5L99.1 895.3M99.1 895.3L-210.8 1043.8M459.9 706.7L299.8 781.1M299.8 781.1L84.2 881.2M84.2 881.2L-221.9 1023.4M444.1 698.9L284.2 771.0M284.2 771.0L69.9 867.6M69.9 867.6L-232.6 1003.9M269.1 761.2L56.0 854.5M56.0 854.5L-242.8 985.2M254.5 751.7L42.7 841.8M42.7 841.8L-252.5 967.3M240.3 742.5L29.8 829.5M29.8 829.5L-261.9 950.2M226.4 733.5L17.3 817.7M17.3 817.7L-270.9 933.7M213.0 724.8L5.2 806.3M5.2 806.3L-279.5 917.8M-17.7 784.5L-295.8 888.0M-28.6 774.1L-303.5 873.9M-39.2 764.0L-310.9 860.3" stroke="#4f565d" stroke-width="1" fill="none" opacity="0.65"/><path d="M892.0 469.2L809.2 451.5M661.9 456.3L592.1 439.5M439.5 443.9L382.0 428.0M275.6 448.5L224.5 431.8M99.0 453.5L55.5 435.9M-495.5 521.9L-510.3 494.8M1010.1 475.9L970.6 496.1M892.6 452.0L847.8 469.1M741.8 445.7L686.8 462.3M443.5 433.4L368.7 449.0M296.0 427.3L211.5 442.5M211.5 442.5L114.6 459.8M-52.3 452.7L-176.9 472.2M-176.9 472.2L-322.7 494.9M-322.7 494.9L-495.5 521.9" stroke="#41484e" stroke-width="1" fill="none" opacity="0.09"/><path d="M1492.0 597.7L1338.6 564.9M1338.6 564.9L1205.1 536.3M1205.1 536.3L1088.0 511.2M1088.0 511.2L984.4 489.0M984.4 489.0L892.0 469.2M739.6 475.0L661.9 456.3M503.4 461.5L439.5 443.9M332.5 467.1L275.6 448.5M147.7 473.2L99.0 453.5M-240.6 512.2L-271.5 486.9M-478.4 553.3L-495.5 521.9M1495.0 574.4L1490.4 610.5M1305.6 535.9L1284.7 565.2M847.8 469.1L796.4 488.7M592.1 439.5L527.1 455.7M368.7 449.0L282.9 466.9M114.6 459.8L2.5 479.9" stroke="#41484e" stroke-width="1" fill="none" opacity="0.17"/><path d="M826.5 496.0L739.6 475.0M574.9 481.3L503.4 461.5M1490.4 610.5L1484.7 654.3M970.6 496.1L924.6 519.6M686.8 462.3L623.8 481.4M527.1 455.7L452.6 474.1M282.9 466.9L183.5 487.7M2.5 479.9L-128.7 503.4M-128.7 503.4L-284.4 531.3" stroke="#41484e" stroke-width="1" fill="none" opacity="0.26"/><path d="M1484.7 654.3L1311.6 612.7M1311.6 612.7L1163.7 577.1M1163.7 577.1L1036.0 546.4M1036.0 546.4L924.6 519.6M924.6 519.6L826.5 496.0M655.3 503.5L574.9 481.3M396.5 488.0L332.5 467.1M202.6 495.4L147.7 473.2M-205.2 541.3L-240.6 512.2M-458.3 590.2L-478.4 553.3M1284.7 565.2L1259.8 600.2M796.4 488.7L736.8 511.5M623.8 481.4L550.6 503.5M452.6 474.1L366.2 495.5M183.5 487.7L67.2 512.0M-284.4 531.3L-472.0 564.9" stroke="#41484e" stroke-width="1" fill="none" opacity="0.34"/><path d="M746.4 528.7L655.3 503.5M468.8 511.7L396.5 488.0M265.0 520.6L202.6 495.4M-164.0 575.1L-205.2 541.3M1484.7 654.3L1477.8 708.8M1259.8 600.2L1229.5 642.7M924.6 519.6L870.6 547.1M736.8 511.5L666.7 538.2M366.2 495.5L265.0 520.6M67.2 512.0L-71.0 540.8" stroke="#41484e" stroke-width="1" fill="none" opacity="0.42"/><path d="M970.6 590.6L850.5 557.4M850.5 557.4L746.4 528.7M551.2 538.6L468.8 511.7M336.6 549.6L265.0 520.6M-434.4 634.0L-458.3 590.2M870.6 547.1L806.3 580.0M550.6 503.5L464.9 529.4M265.0 520.6L144.7 550.5M-71.0 540.8L-237.7 575.6M-237.7 575.6L-442.8 618.5" stroke="#41484e" stroke-width="1" fill="none" opacity="0.51"/><path d="M1475.1 730.0L1276.4 675.1M1276.4 675.1L1110.8 629.3M1110.8 629.3L970.6 590.6M646.0 569.6L551.2 538.6M-115.4 615.0L-164.0 575.1M-405.5 686.9L-434.4 634.0M1477.8 708.8L1468.9 778.2M1229.5 642.7L1192.0 695.4M666.7 538.2L583.4 570.0M464.9 529.4L362.9 560.2M144.7 550.5L-0.5 586.5" stroke="#41484e" stroke-width="1" fill="none" opacity="0.59"/><path d="M885.8 648.0L756.2 605.6M756.2 605.6L646.0 569.6M419.5 583.1L336.6 549.6M1468.9 778.2L1457.2 869.8M806.3 580.0L728.4 619.8M583.4 570.0L482.5 608.6M362.9 560.2L239.5 597.4M-0.5 586.5L-179.5 630.9M-179.5 630.9L-405.5 686.9" stroke="#41484e" stroke-width="1" fill="none" opacity="0.68"/><path d="M1461.5 836.2L1228.4 760.0M1228.4 760.0L1040.5 698.6M1040.5 698.6L885.8 648.0M516.7 622.4L419.5 583.1M-57.4 662.5L-115.4 615.0M-369.9 752.1L-405.5 686.9M1192.0 695.4L1144.2 762.4M728.4 619.8L632.1 669.0M239.5 597.4L87.3 643.4" stroke="#41484e" stroke-width="1" fill="none" opacity="0.77"/><path d="M1441.1 996.1L1159.4 882.2M1159.4 882.2L943.0 794.7M943.0 794.7L771.4 725.4M771.4 725.4L632.1 669.0M632.1 669.0L516.7 622.4M1337.5 1807.1L859.0 1414.5M859.0 1414.5L561.7 1170.5M561.7 1170.5L359.0 1004.3M359.0 1004.3L212.0 883.6M212.0 883.6L100.5 792.1M100.5 792.1L13.0 720.4M13.0 720.4L-57.4 662.5M1122.7 3488.3L417.8 2196.2M417.8 2196.2L104.3 1621.4M104.3 1621.4L-73.0 1296.5M-73.0 1296.5L-187.0 1087.5M-187.0 1087.5L-266.4 941.8M-266.4 941.8L-325.0 834.5M-325.0 834.5L-369.9 752.1M1457.2 869.8L1441.1 996.1M1441.1 996.1L1417.4 1181.5M1417.4 1181.5L1379.2 1480.4M1379.2 1480.4L1307.4 2042.3M1307.4 2042.3L1122.7 3488.3M1144.2 762.4L1081.3 850.6M1081.3 850.6L994.8 972.0M994.8 972.0L868.3 1149.4M868.3 1149.4L665.8 1433.3M665.8 1433.3L289.6 1961.1M632.1 669.0L509.8 731.5M509.8 731.5L349.6 813.3M349.6 813.3L130.6 925.2M130.6 925.2L-187.0 1087.5M482.5 608.6L357.8 656.1M357.8 656.1L200.0 716.4M200.0 716.4L-6.4 795.2M-6.4 795.2L-287.8 902.6M87.3 643.4L-105.1 701.5M-105.1 701.5L-356.2 777.4" stroke="#41484e" stroke-width="1" fill="none" opacity="0.85"/><path d="M244 247L369 1058" stroke="#c8d0d8" stroke-width="1" opacity="0.1"/><path d="M324 247L419 1058" stroke="#c8d0d8" stroke-width="1" opacity="0.08"/><path d="M419 247L486 1058" stroke="#c8d0d8" stroke-width="1" opacity="0.1"/><path d="M683 247L700 1058" stroke="#c8d0d8" stroke-width="1" opacity="0.06"/><path d="M1127 247L985 1058" stroke="#c8d0d8" stroke-width="1" opacity="0.07"/><path d="M912 671L1242 777" stroke="#c8d0d8" stroke-width="1" opacity="0.1"/><path d="M537 247L560 1058" stroke="#c8d0d8" stroke-width="1" opacity="0.05"/><defs><linearGradient id="bg1" gradientUnits="userSpaceOnUse" x1="222.4" y1="627.8" x2="1406.8" y2="1264.3"><stop offset="0" stop-color="#5068c8" stop-opacity="0.35"/><stop offset="0.3" stop-color="#5068c8" stop-opacity="0.9"/><stop offset="1" stop-color="#5068c8" stop-opacity="0.9"/></linearGradient><linearGradient id="rg1" gradientUnits="userSpaceOnUse" x1="998.3" y1="615.4" x2="351.8" y2="1104.3"><stop offset="0" stop-color="#c05048" stop-opacity="0.2"/><stop offset="0.45" stop-color="#c05048" stop-opacity="0.75"/><stop offset="1" stop-color="#c05048" stop-opacity="0.9"/></linearGradient></defs><path d="M222.4 627.8L1406.8 1264.3" stroke="url(#bg1)" stroke-width="1.2"/><path d="M998.3 615.4L351.8 1104.3" stroke="url(#rg1)" stroke-width="1.2"/></g></svg>
<svg style="left:0;top:0" width="1920" height="1152"><defs><linearGradient id="gL" x1="0" y1="0" x2="0" y2="1"><stop offset="0" stop-color="#b0b0b0"/><stop offset="1" stop-color="#ababab"/></linearGradient><linearGradient id="gP" x1="0" y1="0" x2="1" y2="1"><stop offset="0" stop-color="#a9a9a9"/><stop offset="1" stop-color="#a3a3a3"/></linearGradient></defs><path d="M427.8 382.4L668.0 433.0Q668.0 433.0 668.0 433.0L669.0 581.0Q669.0 581.0 669.0 581.0L785.0 614.0Q785.0 614.0 785.0 614.0L759.5 915.0Q759.0 921.0 753.6 918.3L661.0 872.0Q661.0 872.0 661.0 872.0L660.0 871.0Q660.0 871.0 660.0 871.0L654.4 956.0Q654.0 962.0 648.9 958.9L462.4 846.1Q459.0 844.0 458.7 840.0L451.2 748.0Q451.0 746.0 452.9 745.4L468.1 740.6Q470.0 740.0 469.9 738.0L457.1 542.0Q457.0 540.0 455.1 539.3L434.8 532.0Q432.0 531.0 431.8 528.0L421.5 388.0Q421.0 381.0 427.8 382.4Z" fill="url(#gL)"/><path d="M427.9 379.6L605.1 344.2Q611.0 343.0 616.9 344.0L835.1 379.9Q842.0 381.0 835.3 383.0L668.0 433.0Q668.0 433.0 668.0 433.0L427.8 382.4Q421.0 381.0 427.9 379.6Z" fill="#a9a9a9"/><path d="M668.0 433.0L835.3 383.0Q842.0 381.0 841.5 388.0L833.2 498.0Q833.0 501.0 830.3 502.3L669.0 581.0Q669.0 581.0 669.0 581.0L668.0 433.0Q668.0 433.0 668.0 433.0Z" fill="#acacac"/><path d="M669.0 581.0L830.3 502.3Q833.0 501.0 835.9 501.7L924.2 524.3Q931.0 526.0 930.0 532.9L894.1 786.1Q893.0 794.0 887.2 799.5L761.4 916.9Q757.0 921.0 757.5 915.0L783.0 614.0Q783.0 614.0 783.0 614.0L669.0 581.0Q669.0 581.0 669.0 581.0Z" fill="#b2b2b2"/><path d="M669.0 581.0L830.3 502.3Q833.0 501.0 835.9 501.7L923.2 523.3Q930.0 525.0 924.0 528.6L783.0 614.0Q783.0 614.0 783.0 614.0L669.0 581.0Q669.0 581.0 669.0 581.0Z" fill="#a2a2a2"/><path d="M783.0 614.0L926.0 530.5Q932.0 527.0 931.0 533.9L894.2 786.1Q893.0 794.0 887.2 799.5L761.4 916.9Q757.0 921.0 757.5 915.0L783.0 614.0Q783.0 614.0 783.0 614.0Z" fill="#b2b2b2"/><polygon points="661,872 720,905 654,962" fill="#aaaaaa"/><defs><filter id="grain" x="0" y="0" width="100%" height="100%" color-interpolation-filters="sRGB"><feTurbulence type="fractalNoise" baseFrequency="0.38" numOctaves="2" seed="3"/><feColorMatrix type="matrix" values="1.5 0 0 0 -0.25  1.5 0 0 0 -0.25  1.5 0 0 0 -0.25  0 0 0 0 0.11"/></filter><clipPath id="silc"><path d="M427.9 379.6L605.1 344.2Q611.0 343.0 616.9 344.0L835.1 379.9Q842.0 381.0 841.5 388.0L833.2 498.0Q833.0 501.0 835.9 501.7L924.2 524.3Q931.0 526.0 930.0 532.9L894.1 786.1Q893.0 794.0 887.2 799.5L761.4 916.9Q757.0 921.0 751.5 918.6L720.0 905.0Q720.0 905.0 720.0 905.0L657.0 959.4Q654.0 962.0 650.6 959.9L460.7 845.0Q459.0 844.0 458.8 842.0L451.2 748.0Q451.0 746.0 452.9 745.4L468.1 740.6Q470.0 740.0 469.9 738.0L457.1 542.0Q457.0 540.0 455.1 539.3L434.8 532.0Q432.0 531.0 431.8 528.0L421.5 388.0Q421.0 381.0 427.9 379.6Z"/></clipPath></defs><g clip-path="url(#silc)"><rect x="415" y="335" width="525" height="635" filter="url(#grain)"/></g><polygon points="789,622 924,541 880,786 765,890" fill="url(#gP)"/><path d="M668 433 L669 581" stroke="#b8b8b8" stroke-width="4" opacity="0.7"/><path d="M780 620 L758 914" stroke="#b6b6b6" stroke-width="5" opacity="0.7"/><path d="M671 582 L778 613" stroke="#b4b4b4" stroke-width="3" opacity="0.6"/><path d="M788 615 L925 534" stroke="#b8b8b8" stroke-width="4" opacity="0.6"/><path d="M428 384 L668 435 L834 386" stroke="#b2b2b2" stroke-width="2.5" fill="none" opacity="0.6"/><path d="M765 890 L880 786" stroke="#bcbcbc" stroke-width="8" opacity="0.6"/><path d="M789 622 L924 541" stroke="#555" stroke-width="1" opacity="0.6"/><path d="M660 871 L757 921" stroke="#555" stroke-width="1" opacity="0.5" stroke-dasharray="1 1"/><path d="M661 873 L655 961" stroke="#bababa" stroke-width="3" opacity="0.8"/><path d="M457 540 L470 740" stroke="#b4b4b4" stroke-width="3" opacity="0.6"/><path d="M451 746 L459 844" stroke="#b4b4b4" stroke-width="2" opacity="0.5"/><path d="M581 416 L588 923" stroke="#3a3a3a" stroke-width="1" stroke-dasharray="120 3 80 4 150 3 160" opacity="0.85"/><path d="M583 416 L590 923" stroke="#c4c4c4" stroke-width="1" opacity="0.6"/><path d="M581 415 L761 367" stroke="#b8b8b8" stroke-width="1.5" opacity="0.8"/><polygon points="545,397 549,385 644,387 645,398 600,409" fill="#b0b0b0"/><polygon points="549,385 590,377 644,387 601,398" fill="#a6a6a6"/><polygon points="514,390 552,381 549,397" fill="#a9a9a9"/><path d="M514 390 L549 397" stroke="#444" stroke-width="1" stroke-dasharray="1 3" opacity="0.7"/><path d="M590 377 L644 387" stroke="#444" stroke-width="1" stroke-dasharray="1 3" opacity="0.7"/><polygon points="657,369 657,360 745,362 745,366 709,379" fill="#b0b0b0"/><polygon points="657,360 688,353 745,362 709,370" fill="#a6a6a6"/><polygon points="625,364 657,357 657,369" fill="#a9a9a9"/><path d="M625 364 L657 369" stroke="#444" stroke-width="1" stroke-dasharray="1 3" opacity="0.7"/><defs><linearGradient id="hg" x1="0.7" y1="0" x2="0.3" y2="1"><stop offset="0" stop-color="#7e7e7e"/><stop offset="0.55" stop-color="#b4b4b4"/><stop offset="1" stop-color="#c4c4c4"/></linearGradient></defs><ellipse cx="715.5" cy="483" rx="17.5" ry="29.5" fill="url(#hg)" transform="rotate(12 715.5 483)"/><ellipse cx="709.5" cy="486" rx="9.625" ry="25.075" fill="#adadad" transform="rotate(12 715.5 483)"/><ellipse cx="715.5" cy="483" rx="17.5" ry="29.5" fill="none" stroke="#4a4a4a" stroke-width="0.8" stroke-dasharray="1 3" opacity="0.8" transform="rotate(12 715.5 483)"/><ellipse cx="805.3" cy="449.5" rx="14.5" ry="28.5" fill="url(#hg)" transform="rotate(12 805.3 449.5)"/><ellipse cx="799.3" cy="452.5" rx="7.9750000000000005" ry="24.224999999999998" fill="#adadad" transform="rotate(12 805.3 449.5)"/><ellipse cx="805.3" cy="449.5" rx="14.5" ry="28.5" fill="none" stroke="#4a4a4a" stroke-width="0.8" stroke-dasharray="1 3" opacity="0.8" transform="rotate(12 805.3 449.5)"/><path d="M700 482 L708 488" stroke="#6a6a6a" stroke-width="2.2"/><path d="M702 478 L713 460" stroke="#c8c8c8" stroke-width="2"/><path d="M794 443 L800 440" stroke="#c8c8c8" stroke-width="2"/><path d="M712 521 L713 542 L723 538" fill="none" stroke="#d2d2d2" stroke-width="2.2" transform="translate(1,0)"/><path d="M712 521 L713 542 L723 538" fill="none" stroke="#6e6e6e" stroke-width="1.3"/><path d="M798 504 L797 482 L808 501 L807 479" fill="none" stroke="#d2d2d2" stroke-width="2.2" transform="translate(1,0)"/><path d="M798 504 L797 482 L808 501 L807 479" fill="none" stroke="#6e6e6e" stroke-width="1.3"/><path d="M755 524 L755 512 M759 523 L759 514 L766 512 L766 522" fill="none" stroke="#d2d2d2" stroke-width="2.2" transform="translate(1,0)"/><path d="M755 524 L755 512 M759 523 L759 514 L766 512 L766 522" fill="none" stroke="#6e6e6e" stroke-width="1.3"/><ellipse cx="876" cy="740" rx="6" ry="8" fill="#b8b8b8" stroke="#666" stroke-width="0.8" stroke-dasharray="1 1"/><ellipse cx="879" cy="739" rx="4" ry="5" fill="#d0d0d0"/><path d="M690 893 l10 -4 l4 14 l-10 6Z" fill="#c0c0c0" stroke="#777" stroke-width="0.6"/><ellipse cx="691" cy="905" rx="4" ry="5" fill="#8a8a8a"/><path d="M665 868 L667 793" stroke="#2030e0" stroke-width="1.3"/><path d="M665 868 L597 831" stroke="#30d030" stroke-width="1.3"/><path d="M665 868 L718 826" stroke="#e03030" stroke-width="1.3"/></svg>
<div class="t" style="left:945px;top:574.2px;color:#3c4248;font-size:10px;">+X</div>
<div class="t" style="left:236px;top:595.2px;color:#3c4248;font-size:10px;">-Z</div>
<div class="a" style="left:24px;top:249px;width:76px;height:15px;background:#5f676e;border:1px solid #3f464c;border-radius:7px"></div>
<div class="t" style="left:24px;width:76px;text-align:center;top:249.22px;color:#e4e4e4;font-size:11px;">Perspective</div>
<div class="a" style="left:105px;top:249px;width:103px;height:15px;background:#5f676e;border:1px solid #3f464c;border-radius:7px"></div>
<div class="t" style="left:105px;width:103px;text-align:center;top:249.22px;color:#e4e4e4;font-size:11px;">Default</div>
<div class="a" style="left:213px;top:249px;width:99px;height:15px;background:#5f676e;border:1px solid #3f464c;border-radius:7px"></div>
<div class="t" style="left:213px;width:99px;text-align:center;top:249.22px;color:#e4e4e4;font-size:11px;">Ray GL: Off</div>
<svg style="left:1141px;top:249px" width="14" height="14"><path d="M7 0 L10 3 H8 V6 H11 V4 L14 7 L11 10 V8 H8 V11 H10 L7 14 L4 11 H6 V8 H3 V10 L0 7 L3 4 V6 H6 V3 H4Z" fill="#e8e8e8" stroke="#333" stroke-width="0.4"/></svg>
<svg style="left:1162px;top:249px" width="14" height="14"><path d="M11.5 7 A5 5 0 1 1 8 2.2" fill="none" stroke="#e8e8e8" stroke-width="1.5"/><path d="M6.5 0 L10.5 2.5 L6.5 5Z" fill="#e8e8e8"/></svg>
<svg style="left:1182px;top:249px" width="15" height="15"><circle cx="5.5" cy="5.5" r="4.5" fill="none" stroke="#e8e8e8" stroke-width="1.4"/><path d="M9 9 L14 14" stroke="#e8e8e8" stroke-width="2"/></svg>
<svg style="left:1218px;top:249px" width="13" height="13" viewBox="0 0 13 13"><circle cx="6.5" cy="6.5" r="5.2" fill="none" stroke="#e0e0e0" stroke-width="2.6" stroke-dasharray="2.04"/><circle cx="6.5" cy="6.5" r="4.03" fill="#e0e0e0"/><circle cx="6.5" cy="6.5" r="1.43" fill="#5f676e"/></svg>
<div class="t" style="right:689px;top:966.72px;color:#f0c040;font-size:11px;">No Items</div>
<div class="t" style="right:689px;top:981.72px;color:#d8dde2;font-size:11px;">Polygons : Catmull-Clark</div>
<div class="t" style="right:689px;top:996.72px;color:#d8dde2;font-size:11px;">Channels: 0</div>
<div class="t" style="right:689px;top:1011.72px;color:#d8dde2;font-size:11px;">Deformers: ON</div>
<div class="t" style="right:689px;top:1026.72px;color:#d8dde2;font-size:11px;">GL: 364,192</div>
<div class="t" style="right:689px;top:1041.72px;color:#d8dde2;font-size:11px;">5 mm</div>
<svg style="left:18px;top:1010px" width="30" height="42"><text x="3" y="8" font-size="8" fill="#40d040" font-family="Liberation Sans">Y</text><path d="M4 10 L26 19 L26 40 L4 32Z" fill="#6a7076" stroke="#d0d0d0" stroke-width="0.8"/><path d="M4 10 V32" stroke="#30d030" stroke-width="1.2"/><path d="M4 32 L26 40" stroke="#3050e0" stroke-width="1.4"/><path d="M4 32 Q20 28 26 19" stroke="#e03030" stroke-width="1" fill="none"/></svg>
</body></html>
